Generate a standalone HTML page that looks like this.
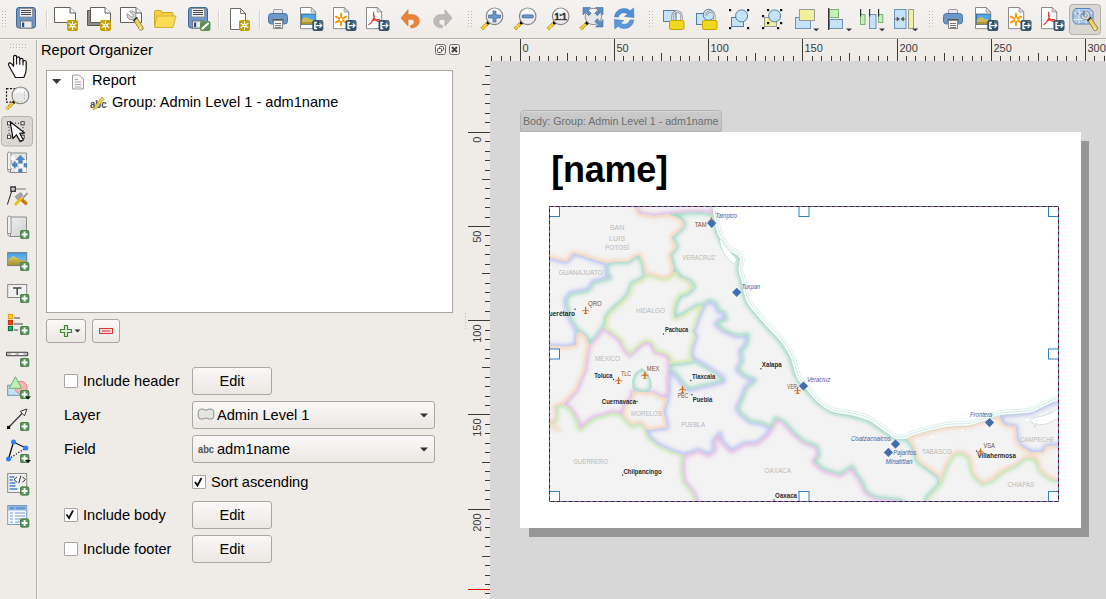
<!DOCTYPE html>
<html><head><meta charset="utf-8"><title>Report</title>
<style>
html,body{margin:0;padding:0}
body{width:1106px;height:599px;position:relative;overflow:hidden;background:#efebe7;font-family:"Liberation Sans",sans-serif;font-size:14.6px;color:#000;line-height:1}
.a{position:absolute}
.t{position:absolute;white-space:nowrap;line-height:16px;height:16px}
.btn{position:absolute;box-sizing:border-box;border:1px solid #aaa6a1;border-radius:3px;background:linear-gradient(#fbfaf9,#f1eeeb 60%,#ebe7e3);text-align:center}
.cb{position:absolute;box-sizing:border-box;width:14px;height:14px;border:1px solid #a9a6a2;background:#fff;border-radius:1px}
svg{position:absolute;overflow:visible}
svg text{font-family:"Liberation Sans",sans-serif}
</style></head><body>
<!-- top toolbar -->
<div class="a" style="left:0;top:0;width:1106px;height:38px;background:linear-gradient(#f5f3f1,#efebe7)"></div>
<div class="a" style="left:0;top:38px;width:1106px;height:1px;background:#b4b0ac"></div>
<div class="a" style="left:0;top:39px;width:1106px;height:1px;background:#f8f6f4"></div>
<!-- left toolbar separator -->
<div class="a" style="left:36px;top:40px;width:1px;height:559px;background:#b4b0ac"></div>
<div class="a" style="left:37px;top:40px;width:1px;height:559px;background:#f8f6f4"></div>
<svg id="topicons" width="1106" height="38" style="left:0;top:0" viewBox="0 0 1106 38">
<rect x="2" y="11" width="1" height="1" fill="#bcb8b3"/><rect x="3" y="12" width="1" height="1" fill="#fbfaf9" opacity=".8"/><rect x="5" y="11" width="1" height="1" fill="#bcb8b3"/><rect x="6" y="12" width="1" height="1" fill="#fbfaf9" opacity=".8"/><rect x="2" y="14" width="1" height="1" fill="#bcb8b3"/><rect x="3" y="15" width="1" height="1" fill="#fbfaf9" opacity=".8"/><rect x="5" y="14" width="1" height="1" fill="#bcb8b3"/><rect x="6" y="15" width="1" height="1" fill="#fbfaf9" opacity=".8"/><rect x="2" y="17" width="1" height="1" fill="#bcb8b3"/><rect x="3" y="18" width="1" height="1" fill="#fbfaf9" opacity=".8"/><rect x="5" y="17" width="1" height="1" fill="#bcb8b3"/><rect x="6" y="18" width="1" height="1" fill="#fbfaf9" opacity=".8"/><rect x="2" y="20" width="1" height="1" fill="#bcb8b3"/><rect x="3" y="21" width="1" height="1" fill="#fbfaf9" opacity=".8"/><rect x="5" y="20" width="1" height="1" fill="#bcb8b3"/><rect x="6" y="21" width="1" height="1" fill="#fbfaf9" opacity=".8"/><rect x="2" y="23" width="1" height="1" fill="#bcb8b3"/><rect x="3" y="24" width="1" height="1" fill="#fbfaf9" opacity=".8"/><rect x="5" y="23" width="1" height="1" fill="#bcb8b3"/><rect x="6" y="24" width="1" height="1" fill="#fbfaf9" opacity=".8"/><rect x="2" y="26" width="1" height="1" fill="#bcb8b3"/><rect x="3" y="27" width="1" height="1" fill="#fbfaf9" opacity=".8"/><rect x="5" y="26" width="1" height="1" fill="#bcb8b3"/><rect x="6" y="27" width="1" height="1" fill="#fbfaf9" opacity=".8"/>
<rect x="16.5" y="7.5" width="19" height="20.500" rx="2.500" fill="#6d97c8" stroke="#3f6a9b"/><rect x="19.5" y="8.5" width="13" height="8.500" fill="#ececec" stroke="#8a8a8a" stroke-width=".8"/><path d="M21 10.5h10M21 12.5h10M21 14.5h10" stroke="#4a4a4a" stroke-width="1"/><rect x="20.5" y="21" width="11.500" height="7" fill="#ececec" stroke="#6a6a6a" stroke-width=".8"/><rect x="22" y="22.5" width="2.200" height="4.500" fill="#2f4e78"/>
<rect x="46" y="10" width="1" height="19" fill="#d6d2ce"/><rect x="47" y="10" width="1" height="19" fill="#fdfcfb"/>
<path d="M54.5 7.5h15.5l5.5 5.5v9.5h-21z" fill="#fff" stroke="#5f5f5f" stroke-width="1" stroke-linejoin="round"/><path d="M70.0 7.5v5.5h5.5" fill="#fbfbfb" stroke="#5f5f5f" stroke-width="1" stroke-linejoin="round"/>
<rect x="67" y="20" width="11" height="11" rx="2" fill="#c4a000"/><g stroke="#fff" stroke-width="1.1" stroke-linecap="round"><path d="M72.5 21.5v8M69.0 23.5l7 4M69.0 27.5l7 -4"/></g><circle cx="72.5" cy="25.5" r="2" fill="#fff"/><circle cx="72.5" cy="25.5" r=".8" fill="#c4a000"/>
<path d="M90 10.500h-2.500v15h15v-3" fill="#8c8c84" stroke="#5a5a55" stroke-linejoin="round"/>
<path d="M90.5 7.5h14.5l5.5 5.5v9.5h-20z" fill="#fff" stroke="#5f5f5f" stroke-width="1" stroke-linejoin="round"/><path d="M105.0 7.5v5.5h5.5" fill="#fbfbfb" stroke="#5f5f5f" stroke-width="1" stroke-linejoin="round"/>
<rect x="100" y="20" width="11" height="11" rx="2" fill="#c4a000"/><g stroke="#fff" stroke-width="1.1" stroke-linecap="round"><path d="M105.5 21.5v8M102.0 23.5l7 4M102.0 27.5l7 -4"/></g><circle cx="105.5" cy="25.5" r="2" fill="#fff"/><circle cx="105.5" cy="25.5" r=".8" fill="#c4a000"/>
<path d="M120.5 7.5h15.5l5.5 5.5v9.5h-21z" fill="#fff" stroke="#5f5f5f" stroke-width="1" stroke-linejoin="round"/><path d="M136.0 7.5v5.5h5.5" fill="#fbfbfb" stroke="#5f5f5f" stroke-width="1" stroke-linejoin="round"/>
<path d="M135.50 19.40L141 28" stroke="#9c8630" stroke-width="5" stroke-linecap="round"/><path d="M135.70 19.60L141 28" stroke="#ead36c" stroke-width="3.300" stroke-linecap="round"/><path d="M139.70 27.70l1.300 1.300" stroke="#f8f4e0" stroke-width="1.200"/><path d="M133.00 16.90L134.90 18.80" stroke="#8a8a8a" stroke-width="4.400"/><path d="M133.00 16.90L134.90 18.80" stroke="#d4d4d4" stroke-width="3"/><path d="M134.70 18.60l1.100 1.100" stroke="#2e2e2e" stroke-width="5"/><path d="M129.71 11.38A4.4 4.4 0 1 1 127.48 13.61L130.73 16.86A1.6 1.6 0 0 0 132.96 14.63z" fill="#dadada" stroke="#858585" stroke-width=".9" stroke-linejoin="round"/>
<path d="M154.500 27v-15.500q0-1 1-1h5q1 0 1.300 1l.4 1h9.800q1 0 1 1v2.500" fill="#f5cf3f" stroke="#c9a62e" stroke-linejoin="round"/><path d="M154.500 27.500l2.500-11.500h19l-3 11.500z" fill="#fcdc55" stroke="#d4b136" stroke-linejoin="round"/>
<rect x="188.5" y="7.5" width="19" height="20.500" rx="2.500" fill="#6d97c8" stroke="#3f6a9b"/><rect x="191.5" y="8.5" width="13" height="8.500" fill="#ececec" stroke="#8a8a8a" stroke-width=".8"/><path d="M193 10.5h10M193 12.5h10M193 14.5h10" stroke="#4a4a4a" stroke-width="1"/><rect x="192.5" y="21" width="11.500" height="7" fill="#ececec" stroke="#6a6a6a" stroke-width=".8"/><rect x="194" y="22.5" width="2.200" height="4.500" fill="#2f4e78"/>
<rect x="200" y="21" width="10.500" height="10" rx="2" fill="#5d9151"/><path d="M202.500 28.500l5.500-5" stroke="#fff" stroke-width="2.200" stroke-linecap="round"/>
<rect x="218" y="10" width="1" height="19" fill="#d6d2ce"/><rect x="219" y="10" width="1" height="19" fill="#fdfcfb"/>
<path d="M230.5 8.5h10l5 5v16h-15z" fill="#fff" stroke="#6a6a6a" stroke-width="1" stroke-linejoin="round"/><path d="M240.5 8.5v5h5z" fill="#e4e4e4" stroke="#6a6a6a" stroke-width=".8" stroke-linejoin="round"/>
<rect x="239" y="20" width="11" height="11" rx="2" fill="#c4a000"/><g stroke="#fff" stroke-width="1.1" stroke-linecap="round"><path d="M244.5 21.5v8M241.0 23.5l7 4M241.0 27.5l7 -4"/></g><circle cx="244.5" cy="25.5" r="2" fill="#fff"/><circle cx="244.5" cy="25.5" r=".8" fill="#c4a000"/>
<rect x="259" y="10" width="1" height="19" fill="#d6d2ce"/><rect x="260" y="10" width="1" height="19" fill="#fdfcfb"/>
<rect x="273.5" y="9.500" width="9" height="6" rx=".8" fill="#e9e9e9" stroke="#9a9a9a"/><rect x="268.5" y="13.500" width="19" height="10.500" rx="3" fill="#6d97c8" stroke="#4a76a8"/><rect x="272.5" y="19" width="11" height="3" fill="#555"/><rect x="273.5" y="20.500" width="9" height="8" fill="#f4f4f4" stroke="#8a8a8a"/><path d="M275 23.5h6M275 25.500h6M275 27.500h6" stroke="#777" stroke-width="1"/>
<path d="M300.5 7.5h10.7l4.5 4.5v16.7h-15.2z" fill="#fff" stroke="#8a8a8a" stroke-width="1" stroke-linejoin="round"/><path d="M311.2 7.5v4.5h4.5z" fill="#e4e4e4" stroke="#8a8a8a" stroke-width=".8" stroke-linejoin="round"/>
<rect x="301.0" y="13.600" width="14.500" height="11.400" fill="#3f6286"/><rect x="301.8" y="14.500" width="13" height="9.700" fill="#4aa8f0"/><path d="M301.8 24.200v-4.800l4-2.600 4 2 5 1.500v3.900z" fill="#cdb85a"/><path d="M301.8 24.200v-2.200h13v2.200z" fill="#ad9530"/>
<rect x="312.3" y="20" width="11" height="11" rx="2.200" fill="#31536b"/><path d="M318.3 20.6h2.800a1.600 1.600 0 0 1 1.600 1.600v3.500z" fill="#5d7a8e" opacity=".8"/><path d="M317.0 22.6h-2.100v6h2.100" fill="none" stroke="#fff" stroke-width="1.500"/><path d="M315.7 25.6h5.600" stroke="#fff" stroke-width="1.300"/><path d="M319.5 23.4l2.300 2.200-2.300 2.200" fill="none" stroke="#fff" stroke-width="1.100"/>
<path d="M333.5 7.5h10.7l4.5 4.5v16.7h-15.2z" fill="#fff" stroke="#8a8a8a" stroke-width="1" stroke-linejoin="round"/><path d="M344.2 7.5v4.5h4.5z" fill="#e4e4e4" stroke="#8a8a8a" stroke-width=".8" stroke-linejoin="round"/>
<path d="M341.00 17.30L341.00 13.70M339.09 18.40L335.98 16.60M339.09 20.60L335.98 22.40M341.00 21.70L341.00 25.30M342.91 20.60L346.02 22.40M342.91 18.40L346.02 16.60" stroke="#ff9800" stroke-width="2" stroke-linecap="round"/>
<rect x="345.5" y="20" width="11" height="11" rx="2.200" fill="#31536b"/><path d="M351.5 20.6h2.800a1.600 1.600 0 0 1 1.600 1.600v3.500z" fill="#5d7a8e" opacity=".8"/><path d="M350.2 22.6h-2.100v6h2.100" fill="none" stroke="#fff" stroke-width="1.500"/><path d="M348.9 25.6h5.600" stroke="#fff" stroke-width="1.300"/><path d="M352.7 23.4l2.300 2.200-2.300 2.200" fill="none" stroke="#fff" stroke-width="1.100"/>
<path d="M366.5 7.5h10.7l4.5 4.5v16.7h-15.2z" fill="#fff" stroke="#8a8a8a" stroke-width="1" stroke-linejoin="round"/><path d="M377.2 7.5v4.5h4.5z" fill="#e4e4e4" stroke="#8a8a8a" stroke-width=".8" stroke-linejoin="round"/>
<path d="M373.7 12.500c-.6 3 .3 5.500 2 7.500 1.500 1.300 3.200 1.800 5 1.500M374.3 16c-.5 3.500-2.500 6.500-5.300 8.500M372.0 21c2.500-1.200 5-1.600 7.500-1.300" fill="none" stroke="#e8352a" stroke-width="1.300" stroke-linecap="round"/>
<rect x="378.5" y="20" width="11" height="11" rx="2.200" fill="#31536b"/><path d="M384.5 20.6h2.800a1.600 1.600 0 0 1 1.600 1.600v3.500z" fill="#5d7a8e" opacity=".8"/><path d="M383.2 22.6h-2.100v6h2.100" fill="none" stroke="#fff" stroke-width="1.500"/><path d="M381.9 25.6h5.600" stroke="#fff" stroke-width="1.300"/><path d="M385.7 23.4l2.300 2.200-2.300 2.200" fill="none" stroke="#fff" stroke-width="1.100"/>
<rect x="948.5" y="9.500" width="9" height="6" rx=".8" fill="#e9e9e9" stroke="#9a9a9a"/><rect x="943.5" y="13.500" width="19" height="10.500" rx="3" fill="#6d97c8" stroke="#4a76a8"/><rect x="947.5" y="19" width="11" height="3" fill="#555"/><rect x="948.5" y="20.500" width="9" height="8" fill="#f4f4f4" stroke="#8a8a8a"/><path d="M950 23.5h6M950 25.500h6M950 27.500h6" stroke="#777" stroke-width="1"/>
<path d="M975.5 7.5h10.7l4.5 4.5v16.7h-15.2z" fill="#fff" stroke="#8a8a8a" stroke-width="1" stroke-linejoin="round"/><path d="M986.2 7.5v4.5h4.5z" fill="#e4e4e4" stroke="#8a8a8a" stroke-width=".8" stroke-linejoin="round"/>
<rect x="976.0" y="13.600" width="14.500" height="11.400" fill="#3f6286"/><rect x="976.8" y="14.500" width="13" height="9.700" fill="#4aa8f0"/><path d="M976.8 24.200v-4.800l4-2.600 4 2 5 1.500v3.900z" fill="#cdb85a"/><path d="M976.8 24.200v-2.200h13v2.200z" fill="#ad9530"/>
<rect x="987.3" y="20" width="11" height="11" rx="2.200" fill="#31536b"/><path d="M993.3 20.6h2.800a1.600 1.600 0 0 1 1.600 1.600v3.500z" fill="#5d7a8e" opacity=".8"/><path d="M992.0 22.6h-2.100v6h2.100" fill="none" stroke="#fff" stroke-width="1.500"/><path d="M990.6999999999999 25.6h5.600" stroke="#fff" stroke-width="1.300"/><path d="M994.5 23.4l2.300 2.200-2.300 2.200" fill="none" stroke="#fff" stroke-width="1.100"/>
<path d="M1008.5 7.5h10.7l4.5 4.5v16.7h-15.2z" fill="#fff" stroke="#8a8a8a" stroke-width="1" stroke-linejoin="round"/><path d="M1019.2 7.5v4.5h4.5z" fill="#e4e4e4" stroke="#8a8a8a" stroke-width=".8" stroke-linejoin="round"/>
<path d="M1016.00 17.30L1016.00 13.70M1014.09 18.40L1010.98 16.60M1014.09 20.60L1010.98 22.40M1016.00 21.70L1016.00 25.30M1017.91 20.60L1021.02 22.40M1017.91 18.40L1021.02 16.60" stroke="#ff9800" stroke-width="2" stroke-linecap="round"/>
<rect x="1020.5" y="20" width="11" height="11" rx="2.200" fill="#31536b"/><path d="M1026.5 20.6h2.800a1.600 1.600 0 0 1 1.600 1.600v3.500z" fill="#5d7a8e" opacity=".8"/><path d="M1025.2 22.6h-2.100v6h2.100" fill="none" stroke="#fff" stroke-width="1.500"/><path d="M1023.9 25.6h5.600" stroke="#fff" stroke-width="1.300"/><path d="M1027.7 23.4l2.300 2.200-2.300 2.200" fill="none" stroke="#fff" stroke-width="1.100"/>
<path d="M1041.5 7.5h10.7l4.5 4.5v16.7h-15.2z" fill="#fff" stroke="#8a8a8a" stroke-width="1" stroke-linejoin="round"/><path d="M1052.2 7.5v4.5h4.5z" fill="#e4e4e4" stroke="#8a8a8a" stroke-width=".8" stroke-linejoin="round"/>
<path d="M1048.7 12.500c-.6 3 .3 5.500 2 7.500 1.500 1.300 3.200 1.800 5 1.500M1049.3 16c-.5 3.500-2.500 6.500-5.300 8.500M1047.0 21c2.500-1.200 5-1.600 7.500-1.300" fill="none" stroke="#e8352a" stroke-width="1.300" stroke-linecap="round"/>
<rect x="1053.5" y="20" width="11" height="11" rx="2.200" fill="#31536b"/><path d="M1059.5 20.6h2.800a1.600 1.600 0 0 1 1.600 1.600v3.500z" fill="#5d7a8e" opacity=".8"/><path d="M1058.2 22.6h-2.100v6h2.100" fill="none" stroke="#fff" stroke-width="1.500"/><path d="M1056.9 25.6h5.600" stroke="#fff" stroke-width="1.300"/><path d="M1060.7 23.4l2.300 2.200-2.300 2.200" fill="none" stroke="#fff" stroke-width="1.100"/>
<path d="M401 18L408 9.800V14.700H412C416.5 14.700 419.2 17.300 419.2 21C419.2 25 416 27.800 411 27.800L410.2 25.600C412.8 25.300 414.2 24 414.2 22C414.2 20.200 413 19.200 411 19.200H408V26Z" fill="#e8833a" stroke="#de7426" stroke-width=".7" stroke-linejoin="round"/>
<path d="M452 18L445 9.800V14.700H441C436.5 14.700 433.8 17.300 433.8 21C433.8 25 437 27.800 442 27.800L442.8 25.600C440.2 25.300 438.8 24 438.8 22C438.8 20.200 440 19.200 442 19.200H445V26Z" fill="#bdbbb8" stroke="#a9a7a4" stroke-width=".7" stroke-linejoin="round"/>
<rect x="468" y="11" width="1" height="1" fill="#bcb8b3"/><rect x="469" y="12" width="1" height="1" fill="#fbfaf9" opacity=".8"/><rect x="471" y="11" width="1" height="1" fill="#bcb8b3"/><rect x="472" y="12" width="1" height="1" fill="#fbfaf9" opacity=".8"/><rect x="468" y="14" width="1" height="1" fill="#bcb8b3"/><rect x="469" y="15" width="1" height="1" fill="#fbfaf9" opacity=".8"/><rect x="471" y="14" width="1" height="1" fill="#bcb8b3"/><rect x="472" y="15" width="1" height="1" fill="#fbfaf9" opacity=".8"/><rect x="468" y="17" width="1" height="1" fill="#bcb8b3"/><rect x="469" y="18" width="1" height="1" fill="#fbfaf9" opacity=".8"/><rect x="471" y="17" width="1" height="1" fill="#bcb8b3"/><rect x="472" y="18" width="1" height="1" fill="#fbfaf9" opacity=".8"/><rect x="468" y="20" width="1" height="1" fill="#bcb8b3"/><rect x="469" y="21" width="1" height="1" fill="#fbfaf9" opacity=".8"/><rect x="471" y="20" width="1" height="1" fill="#bcb8b3"/><rect x="472" y="21" width="1" height="1" fill="#fbfaf9" opacity=".8"/><rect x="468" y="23" width="1" height="1" fill="#bcb8b3"/><rect x="469" y="24" width="1" height="1" fill="#fbfaf9" opacity=".8"/><rect x="471" y="23" width="1" height="1" fill="#bcb8b3"/><rect x="472" y="24" width="1" height="1" fill="#fbfaf9" opacity=".8"/><rect x="468" y="26" width="1" height="1" fill="#bcb8b3"/><rect x="469" y="27" width="1" height="1" fill="#fbfaf9" opacity=".8"/><rect x="471" y="26" width="1" height="1" fill="#bcb8b3"/><rect x="472" y="27" width="1" height="1" fill="#fbfaf9" opacity=".8"/>
<path d="M488.3 22.700000000000003l-6.600 6.200" stroke="#6b5d14" stroke-width="3.600" stroke-dasharray="1 1"/><path d="M488.3 22.700000000000003l-6.600 6.200" stroke="#f7cb1c" stroke-width="2.400"/><circle cx="488.2" cy="22.8" r="1.700" fill="#0a0a0a"/><circle cx="494.5" cy="16.3" r="8.3" fill="#ececec" stroke="#858585" stroke-width="1.100"/>
<path d="M487.8 15.3a6.700000000000001 6.700000000000001 0 0 1 13.400000000000002 0a12.3 12.3 0 0 0 -13.400000000000002 0z" fill="#fff" opacity=".75"/>
<path d="M493 11h3v4h4.500v3h-4.500v4h-3v-4h-4.500v-3h4.500z" fill="#6a97cc" stroke="#3f6c9f" stroke-width=".7"/>
<path d="M521.5 22.700000000000003l-6.600 6.200" stroke="#6b5d14" stroke-width="3.600" stroke-dasharray="1 1"/><path d="M521.5 22.700000000000003l-6.600 6.200" stroke="#f7cb1c" stroke-width="2.400"/><circle cx="521.4000000000001" cy="22.8" r="1.700" fill="#0a0a0a"/><circle cx="527.7" cy="16.3" r="8.3" fill="#ececec" stroke="#858585" stroke-width="1.100"/>
<path d="M521.0000000000001 15.3a6.700000000000001 6.700000000000001 0 0 1 13.400000000000002 0a12.3 12.3 0 0 0 -13.400000000000002 0z" fill="#fff" opacity=".75"/>
<rect x="522" y="14.900" width="11.400" height="3" rx="1" fill="#6a97cc" stroke="#3f6c9f" stroke-width=".7"/>
<path d="M554.5 22.700000000000003l-6.600 6.200" stroke="#6b5d14" stroke-width="3.600" stroke-dasharray="1 1"/><path d="M554.5 22.700000000000003l-6.600 6.200" stroke="#f7cb1c" stroke-width="2.400"/><circle cx="554.4000000000001" cy="22.8" r="1.700" fill="#0a0a0a"/><circle cx="560.7" cy="16.3" r="8.3" fill="#ececec" stroke="#858585" stroke-width="1.100"/>
<path d="M554.0000000000001 15.3a6.700000000000001 6.700000000000001 0 0 1 13.400000000000002 0a12.3 12.3 0 0 0 -13.400000000000002 0z" fill="#fff" opacity=".75"/>
<text x="560.400" y="19.700" text-rendering="geometricPrecision" text-anchor="middle" font-size="10" fill="#2e3436" stroke="#2e3436" stroke-width=".7" letter-spacing="-.6">1:1</text>
<path d="M587.200 22.900l-6.600 6.200" stroke="#6b5d14" stroke-width="3.600" stroke-dasharray="1 1"/><path d="M587.200 22.900l-6.600 6.200" stroke="#f7cb1c" stroke-width="2.400"/><circle cx="587.100" cy="23" r="1.700" fill="#0a0a0a"/>
<circle cx="593.400" cy="16.500" r="8.200" fill="#e6e6e6"/><path d="M586.800 15a6.600 6.600 0 0 1 13.200 0a12 12 0 0 0 -13.200 0z" fill="#fff" opacity=".7"/>
<path d="M583 7.500h7.500l-2.500 2.500 3.200 3.200-2.500 2.500-3.200-3.200-2.500 2.500zM603 7.500h-7.500l2.500 2.500-3.200 3.200 2.500 2.500 3.200-3.200 2.500 2.500zM603 27v-7.500l-2.500 2.500-3.200-3.200-2.500 2.500 3.200 3.200-2.500 2.500z" fill="#5b8cc6" stroke="#41709f" stroke-width=".6" stroke-linejoin="round"/>
<circle cx="593.400" cy="16.500" r="8.200" fill="none" stroke="#8a8a8a" stroke-width="1"/>
<path d="M614.500 17c.5-5 4.500-8.500 9.500-8.500 2.500 0 4.500.8 6.200 2.200l3.300-2.700.5 9.500-9.500-1 3-2.600c-1-.8-2.200-1.200-3.500-1.200-2.800 0-5 2-5.500 4.300z" fill="#4f8fd6" stroke="#3a78c0" stroke-width=".5"/>
<path d="M633.800 20c-.5 5-4.500 8.500-9.500 8.500-2.500 0-4.500-.8-6.200-2.200l-3.300 2.700-.5-9.500 9.500 1-3 2.600c1 .8 2.200 1.200 3.500 1.200 2.800 0 5-2 5.500-4.300z" fill="#5a98dc" stroke="#3a78c0" stroke-width=".5"/>
<rect x="649" y="11" width="1" height="1" fill="#bcb8b3"/><rect x="650" y="12" width="1" height="1" fill="#fbfaf9" opacity=".8"/><rect x="652" y="11" width="1" height="1" fill="#bcb8b3"/><rect x="653" y="12" width="1" height="1" fill="#fbfaf9" opacity=".8"/><rect x="649" y="14" width="1" height="1" fill="#bcb8b3"/><rect x="650" y="15" width="1" height="1" fill="#fbfaf9" opacity=".8"/><rect x="652" y="14" width="1" height="1" fill="#bcb8b3"/><rect x="653" y="15" width="1" height="1" fill="#fbfaf9" opacity=".8"/><rect x="649" y="17" width="1" height="1" fill="#bcb8b3"/><rect x="650" y="18" width="1" height="1" fill="#fbfaf9" opacity=".8"/><rect x="652" y="17" width="1" height="1" fill="#bcb8b3"/><rect x="653" y="18" width="1" height="1" fill="#fbfaf9" opacity=".8"/><rect x="649" y="20" width="1" height="1" fill="#bcb8b3"/><rect x="650" y="21" width="1" height="1" fill="#fbfaf9" opacity=".8"/><rect x="652" y="20" width="1" height="1" fill="#bcb8b3"/><rect x="653" y="21" width="1" height="1" fill="#fbfaf9" opacity=".8"/><rect x="649" y="23" width="1" height="1" fill="#bcb8b3"/><rect x="650" y="24" width="1" height="1" fill="#fbfaf9" opacity=".8"/><rect x="652" y="23" width="1" height="1" fill="#bcb8b3"/><rect x="653" y="24" width="1" height="1" fill="#fbfaf9" opacity=".8"/><rect x="649" y="26" width="1" height="1" fill="#bcb8b3"/><rect x="650" y="27" width="1" height="1" fill="#fbfaf9" opacity=".8"/><rect x="652" y="26" width="1" height="1" fill="#bcb8b3"/><rect x="653" y="27" width="1" height="1" fill="#fbfaf9" opacity=".8"/>
<rect x="663.500" y="10.500" width="12.500" height="11" fill="#c6e2f7" stroke="#4f7da6"/>
<path d="M672.500 21v-4.500a4.500 5 0 0 1 9 0v4.500" fill="none" stroke="#9a9a9a" stroke-width="2.600"/><path d="M672.500 21v-4.500a4.500 5 0 0 1 9 0v4.500" fill="none" stroke="#e0e0e0" stroke-width="1"/>
<rect x="669.500" y="20.500" width="14.500" height="9" rx="1.500" fill="#f0d81e" stroke="#c9a400"/>
<rect x="696.500" y="13.500" width="12" height="11" fill="#c6e2f7" stroke="#4f7da6"/><circle cx="708.700" cy="14.800" r="5.500" fill="#c6e2f7" stroke="#4f7da6"/>
<path d="M714.500 21v-4.500a4.200 4.500 0 0 0-8.400-.5" fill="none" stroke="#9a9a9a" stroke-width="2.400"/><path d="M714.500 21v-4.500a4.200 4.500 0 0 0-8.400-.5" fill="none" stroke="#e4e4e4" stroke-width=".9"/>
<rect x="702.500" y="20.500" width="14.500" height="9" rx="1.500" fill="#f0d81e" stroke="#c9a400"/>
<rect x="731.500" y="17.500" width="12" height="9" fill="#c6e2f7" stroke="#4f7da6"/><circle cx="741.600" cy="15.900" r="6" fill="#c6e2f7" stroke="#4f7da6"/>
<rect x="729" y="9" width="2.200" height="2.200" fill="#111"/>
<rect x="747" y="9" width="2.200" height="2.200" fill="#111"/>
<rect x="729" y="27" width="2.200" height="2.200" fill="#111"/>
<rect x="747" y="27" width="2.200" height="2.200" fill="#111"/>
<rect x="764.500" y="17.500" width="12" height="9" fill="#f3f09a" stroke="#9a9a9a"/><circle cx="774.600" cy="15.900" r="6" fill="#c6e2f7" stroke="#4f7da6"/>
<rect x="767" y="9" width="2.200" height="2.200" fill="#111"/>
<rect x="780" y="9" width="2.200" height="2.200" fill="#111"/>
<rect x="762" y="15" width="2.200" height="2.200" fill="#111"/>
<rect x="767" y="22" width="2.200" height="2.200" fill="#111"/>
<rect x="780" y="22" width="2.200" height="2.200" fill="#111"/>
<rect x="762" y="27" width="2.200" height="2.200" fill="#111"/>
<rect x="777" y="27" width="2.200" height="2.200" fill="#111"/>
<rect x="795.500" y="17.500" width="15" height="11" fill="#c6e2f7" stroke="#6a93b8"/><rect x="799.500" y="9.500" width="15" height="11" fill="#f3f09a" stroke="#9a9a9a"/>
<path d="M813.2 28.500h6l-3 2.700z" fill="#333"/>
<rect x="829.500" y="9.500" width="9" height="8" fill="#c2f0b8" stroke="#7ab070"/><rect x="829.500" y="19.500" width="13" height="9" fill="#c6e2f7" stroke="#6a93b8"/><rect x="828" y="8" width="1.300" height="22" fill="#333"/>
<path d="M846 28.500h6l-3 2.700z" fill="#333"/>
<rect x="860.500" y="14.500" width="4.500" height="10" fill="#c2f0b8" stroke="#7ab070"/><rect x="869.500" y="14.500" width="6.500" height="14" fill="#c6e2f7" stroke="#6a93b8"/><rect x="878.500" y="14.500" width="4.300" height="8" fill="#c2f0b8" stroke="#7ab070"/>
<rect x="860" y="9" width="1.200" height="7.500" fill="#333"/>
<rect x="869" y="9" width="1.200" height="7.500" fill="#333"/>
<rect x="878" y="9" width="1.200" height="7.500" fill="#333"/>
<path d="M879 28.500h6l-3 2.700z" fill="#333"/>
<rect x="894.500" y="9.500" width="11.500" height="19" fill="#c6e2f7" stroke="#6a93b8"/><rect x="908.500" y="9.500" width="5" height="19" fill="#f3f09a" stroke="#9a9a9a"/>
<path d="M894.500 19h2.500v-2l2.500 2-2.500 2v-2M906 19h-2.500v-2l-2.500 2 2.500 2v-2" fill="#555" stroke="#555" stroke-width=".7"/>
<path d="M912.2 28.500h6l-3 2.700z" fill="#333"/>
<rect x="929" y="11" width="1" height="1" fill="#bcb8b3"/><rect x="930" y="12" width="1" height="1" fill="#fbfaf9" opacity=".8"/><rect x="932" y="11" width="1" height="1" fill="#bcb8b3"/><rect x="933" y="12" width="1" height="1" fill="#fbfaf9" opacity=".8"/><rect x="929" y="14" width="1" height="1" fill="#bcb8b3"/><rect x="930" y="15" width="1" height="1" fill="#fbfaf9" opacity=".8"/><rect x="932" y="14" width="1" height="1" fill="#bcb8b3"/><rect x="933" y="15" width="1" height="1" fill="#fbfaf9" opacity=".8"/><rect x="929" y="17" width="1" height="1" fill="#bcb8b3"/><rect x="930" y="18" width="1" height="1" fill="#fbfaf9" opacity=".8"/><rect x="932" y="17" width="1" height="1" fill="#bcb8b3"/><rect x="933" y="18" width="1" height="1" fill="#fbfaf9" opacity=".8"/><rect x="929" y="20" width="1" height="1" fill="#bcb8b3"/><rect x="930" y="21" width="1" height="1" fill="#fbfaf9" opacity=".8"/><rect x="932" y="20" width="1" height="1" fill="#bcb8b3"/><rect x="933" y="21" width="1" height="1" fill="#fbfaf9" opacity=".8"/><rect x="929" y="23" width="1" height="1" fill="#bcb8b3"/><rect x="930" y="24" width="1" height="1" fill="#fbfaf9" opacity=".8"/><rect x="932" y="23" width="1" height="1" fill="#bcb8b3"/><rect x="933" y="24" width="1" height="1" fill="#fbfaf9" opacity=".8"/><rect x="929" y="26" width="1" height="1" fill="#bcb8b3"/><rect x="930" y="27" width="1" height="1" fill="#fbfaf9" opacity=".8"/><rect x="932" y="26" width="1" height="1" fill="#bcb8b3"/><rect x="933" y="27" width="1" height="1" fill="#fbfaf9" opacity=".8"/>
<rect x="1069.500" y="4.500" width="31" height="30" rx="3" fill="#dad6d2" stroke="#b3afab"/>
<path d="M1075.500 8.500h14.500l3 3v9.500l-3 3h-14.500l-2.500-3v-9.500z" fill="#a9c4e6" stroke="#5a84b8"/><path d="M1079 9v14.500M1086 9v14.500M1073.500 13h19M1073.500 19.500h19" stroke="#e4eefa" stroke-width="1"/><path d="M1076 12l2 3 1-2zM1083 11l2 2-1 3-2-1zM1088 12l2 1-1 2z" fill="#4a76b0" opacity=".8"/>
<path d="M1089.50 19.40L1095.5 28.5" stroke="#9c8630" stroke-width="5" stroke-linecap="round"/><path d="M1089.70 19.60L1095.5 28.5" stroke="#ead36c" stroke-width="3.300" stroke-linecap="round"/><path d="M1094.20 28.20l1.300 1.300" stroke="#f8f4e0" stroke-width="1.200"/><path d="M1087.00 16.90L1088.90 18.80" stroke="#8a8a8a" stroke-width="4.400"/><path d="M1087.00 16.90L1088.90 18.80" stroke="#d4d4d4" stroke-width="3"/><path d="M1088.70 18.60l1.100 1.100" stroke="#2e2e2e" stroke-width="5"/><path d="M1083.71 11.38A4.4 4.4 0 1 1 1081.48 13.61L1084.73 16.86A1.6 1.6 0 0 0 1086.96 14.63z" fill="#dadada" stroke="#858585" stroke-width=".9" stroke-linejoin="round"/>
</svg>
<svg id="lefticons" width="36" height="559" style="left:0;top:40px" viewBox="0 40 36 559">
<defs><linearGradient id="sg" x1="0" y1="0" x2="1" y2="1"><stop offset="0" stop-color="#efefef"/><stop offset="1" stop-color="#cfcfcf"/></linearGradient><linearGradient id="sky" x1="0" y1="0" x2="0" y2="1"><stop offset="0" stop-color="#3f9ee8"/><stop offset="1" stop-color="#8ccbf5"/></linearGradient><linearGradient id="sand" x1="0" y1="0" x2="0" y2="1"><stop offset="0" stop-color="#dccb6e"/><stop offset="1" stop-color="#a88f2a"/></linearGradient></defs>
<rect x="10" y="44" width="1" height="1" fill="#bcb8b3"/><rect x="11" y="45" width="1" height="1" fill="#fbfaf9" opacity=".8"/>
<rect x="13" y="44" width="1" height="1" fill="#bcb8b3"/><rect x="14" y="45" width="1" height="1" fill="#fbfaf9" opacity=".8"/>
<rect x="16" y="44" width="1" height="1" fill="#bcb8b3"/><rect x="17" y="45" width="1" height="1" fill="#fbfaf9" opacity=".8"/>
<rect x="19" y="44" width="1" height="1" fill="#bcb8b3"/><rect x="20" y="45" width="1" height="1" fill="#fbfaf9" opacity=".8"/>
<rect x="22" y="44" width="1" height="1" fill="#bcb8b3"/><rect x="23" y="45" width="1" height="1" fill="#fbfaf9" opacity=".8"/>
<rect x="25" y="44" width="1" height="1" fill="#bcb8b3"/><rect x="26" y="45" width="1" height="1" fill="#fbfaf9" opacity=".8"/>
<rect x="10" y="47" width="1" height="1" fill="#bcb8b3"/><rect x="11" y="48" width="1" height="1" fill="#fbfaf9" opacity=".8"/>
<rect x="13" y="47" width="1" height="1" fill="#bcb8b3"/><rect x="14" y="48" width="1" height="1" fill="#fbfaf9" opacity=".8"/>
<rect x="16" y="47" width="1" height="1" fill="#bcb8b3"/><rect x="17" y="48" width="1" height="1" fill="#fbfaf9" opacity=".8"/>
<rect x="19" y="47" width="1" height="1" fill="#bcb8b3"/><rect x="20" y="48" width="1" height="1" fill="#fbfaf9" opacity=".8"/>
<rect x="22" y="47" width="1" height="1" fill="#bcb8b3"/><rect x="23" y="48" width="1" height="1" fill="#fbfaf9" opacity=".8"/>
<rect x="25" y="47" width="1" height="1" fill="#bcb8b3"/><rect x="26" y="48" width="1" height="1" fill="#fbfaf9" opacity=".8"/>
<path d="M15.500 77.500L9.300 66.500Q7.600 63.300 9.600 62.900Q11.200 62.700 13.600 66.300V57Q13.600 55.300 15.100 55.300Q16.600 55.300 16.600 57V58.300Q16.800 56.900 18.200 56.900Q19.800 56.900 19.800 58.500V59.800Q20 58.400 21.400 58.400Q23 58.400 23 60V61.800Q23.200 60.500 24.600 60.500Q26.200 60.500 26.200 62.200V69Q26.200 73 23.800 77.500Z" fill="#fff" stroke="#111" stroke-width="1.200" stroke-linejoin="round"/><path d="M16.600 58V64.500M19.800 59.500V64.800M23 61.500V65.500" stroke="#111" stroke-width="1.100" fill="none"/>
<rect x="6.500" y="88.700" width="8" height="13.500" fill="none" stroke="#111" stroke-width="1.200" stroke-dasharray="2 1.500"/>
<path d="M14 102l-7.500 7" stroke="#6b5d14" stroke-width="3.400" stroke-dasharray="1 1"/><path d="M14 102l-7.500 7" stroke="#f7cb1c" stroke-width="2.200"/><circle cx="14" cy="102" r="1.600" fill="#0a0a0a"/><circle cx="20.400" cy="95.400" r="8.400" fill="#e8e8e8" stroke="#858585" stroke-width="1.100"/><path d="M13.700 94.400a6.800 6.800 0 0 1 13.400 0a12 12 0 0 0 -13.400 0z" fill="#fff" opacity=".7"/><path d="M24.500 91.500v8.500M14.500 102h9" stroke="#b8b8b8" stroke-width="1" stroke-dasharray="1.500 1.500" fill="none"/>
<rect x="1.500" y="116.500" width="31" height="29.500" rx="3.500" fill="#dbd7d3" stroke="#b7b3af"/>
<rect x="9" y="123.200" width="14" height="13.800" fill="none" stroke="#222" stroke-width="1" stroke-dasharray="1 2"/>
<rect x="7.5" y="121.7" width="3.200" height="3.200" fill="#fff" stroke="#333" stroke-width=".9"/>
<rect x="21" y="121.7" width="3.200" height="3.200" fill="#fff" stroke="#333" stroke-width=".9"/>
<rect x="7.5" y="135.2" width="3.200" height="3.200" fill="#fff" stroke="#333" stroke-width=".9"/>
<rect x="21" y="135.2" width="3.200" height="3.200" fill="#fff" stroke="#333" stroke-width=".9"/>
<path d="M10.200 121.800L13 138.600L16.400 134.800L20.200 141.600L23.300 139.900L19.700 133.300L24.600 132.900Z" fill="#fff" stroke="#111" stroke-width="1.200" stroke-linejoin="round"/>
<path d="M10.500 153.0h16v19.500h-16z" fill="#e4e4e4" stroke="#8a8a8a"/><path d="M7.500 154.0q0-2 1.800-2t1.800 2v15.500h-3.600z" fill="#f0f0f0" stroke="#8a8a8a" stroke-width=".9"/><path d="M7.500 169.5q0 3 3 3h2" fill="none" stroke="#8a8a8a" stroke-width=".9"/>
<path d="M11 156h4v4h-4zM19 156h4v4h-4zM15 160h4v4h-4zM23 160h3.500v4h-3.500zM11 164h4v4h-4zM19 164h4v4h-4zM15 168h4v4h-4zM23 168h3.500v4h-3.500z" fill="#f6f6f6"/>
<path d="M20.400 155.200l4.300 4.500h-2.400v3.500h-3.800v-3.500h-2.400zM11.800 164.800l3.400-3.600v2h2v3.200h-2v2zM24 163.500h2.600v3.200h-2.600zM18.600 169h3.400v3h-3.400z" fill="#4a86c8" stroke="#3a6ea8" stroke-width=".5"/>
<rect x="10.200" y="186.200" width="5.800" height="5.800" fill="#3a3a3a"/><circle cx="13.100" cy="189.100" r="1.700" fill="#fff"/><circle cx="13.100" cy="189.100" r=".7" fill="#3a3a3a"/><path d="M16 189h10" stroke="#9a9a9a" stroke-width="1.400"/><path d="M11.400 192L7.400 204.500" stroke="#222" stroke-width="1"/>
<path d="M22.500 198.500l5-5.500" stroke="#8e8e8e" stroke-width="1.600"/><path d="M21.500 199.500l5.300 4.800" stroke="#c47a14" stroke-width="3.400"/><path d="M21.500 198l-6.500 7" stroke="#e8c010" stroke-width="3"/><path d="M15.200 196.500l5.500-4 2.200 3-5.500 4z" fill="#a8a8a8" stroke="#777" stroke-width=".6"/>
<path d="M10.500 217.0h16v19.500h-16z" fill="url(#sg)" stroke="#8a8a8a"/><path d="M7.500 218.0q0-2 1.800-2t1.800 2v15.500h-3.600z" fill="#f0f0f0" stroke="#8a8a8a" stroke-width=".9"/><path d="M7.500 233.5q0 3 3 3h2" fill="none" stroke="#8a8a8a" stroke-width=".9"/>
<rect x="20" y="230" width="9.200" height="9" rx="1.800" fill="#5a9358"/><rect x="20.5" y="230.5" width="8.200" height="8" rx="1.500" fill="none" stroke="#4a7f49" stroke-width=".8"/><path d="M24.6 231.6v5.800M21.7 234.5h5.800" stroke="#fff" stroke-width="1.900"/>
<rect x="7.700" y="252.600" width="19" height="13" fill="url(#sky)" stroke="#7d7d7d"/><path d="M8.200 265.100v-5.600l5-3.600 6 3 7 2.500v3.700z" fill="url(#sand)"/>
<rect x="20" y="262" width="9.200" height="9" rx="1.800" fill="#5a9358"/><rect x="20.5" y="262.5" width="8.200" height="8" rx="1.500" fill="none" stroke="#4a7f49" stroke-width=".8"/><path d="M24.6 263.6v5.800M21.7 266.5h5.800" stroke="#fff" stroke-width="1.900"/>
<rect x="7.700" y="284.500" width="19" height="13" fill="#f0f0f0" stroke="#8a8a8a"/><path d="M13 288h8.500M17.200 288v7" stroke="#444" stroke-width="1.500" fill="none"/>
<rect x="20" y="294" width="9.200" height="9" rx="1.800" fill="#5a9358"/><rect x="20.5" y="294.5" width="8.200" height="8" rx="1.500" fill="none" stroke="#4a7f49" stroke-width=".8"/><path d="M24.6 295.6v5.800M21.7 298.5h5.800" stroke="#fff" stroke-width="1.900"/>
<rect x="8.400" y="314.400" width="4.200" height="4.200" fill="#ffd400" stroke="#f0a000"/><rect x="8.400" y="320.400" width="4.200" height="4.200" fill="#f04800" stroke="#c23000"/><rect x="8.400" y="326.400" width="4.200" height="4.200" fill="#10b858" stroke="#006838"/><path d="M14 318h6M14 324h9M14 330h4" stroke="#9a9a9a" stroke-width="1.800"/>
<rect x="20" y="326" width="9.200" height="9" rx="1.800" fill="#5a9358"/><rect x="20.5" y="326.5" width="8.200" height="8" rx="1.500" fill="none" stroke="#4a7f49" stroke-width=".8"/><path d="M24.6 327.6v5.800M21.7 330.5h5.800" stroke="#fff" stroke-width="1.900"/>
<rect x="6.500" y="352.300" width="21.200" height="3.400" rx=".8" fill="#bdbdbd" stroke="#444" stroke-width="1.100"/><path d="M11 354h4.500M19 354h4.500" stroke="#fff" stroke-width="1.600"/>
<rect x="20" y="358" width="9.200" height="9" rx="1.800" fill="#5a9358"/><rect x="20.5" y="358.5" width="8.200" height="8" rx="1.500" fill="none" stroke="#4a7f49" stroke-width=".8"/><path d="M24.6 359.6v5.800M21.7 362.5h5.800" stroke="#fff" stroke-width="1.900"/>
<rect x="7.700" y="385.300" width="12.500" height="10" fill="#c6e2f7" stroke="#6a93b8"/><circle cx="20.900" cy="387.500" r="6.200" fill="#f8b4b4" stroke="#e08888"/><path d="M15.400 376.800l6.200 11.500h-12.400z" fill="#bdf0b4" stroke="#70b068" stroke-linejoin="round"/>
<rect x="20" y="390" width="9.200" height="9" rx="1.800" fill="#5a9358"/><rect x="20.5" y="390.5" width="8.200" height="8" rx="1.500" fill="none" stroke="#4a7f49" stroke-width=".8"/><path d="M24.6 391.6v5.800M21.7 394.5h5.800" stroke="#fff" stroke-width="1.900"/>
<path d="M25 396.5h6l-3 3z" fill="#111"/>
<path d="M9 427l13.500-14" stroke="#333" stroke-width="1.100"/><rect x="7" y="425.800" width="3.200" height="3.200" fill="#111"/><path d="M27 409l-2.500 6.800-4.300-4.400z" fill="#fff" stroke="#333" stroke-width="1" stroke-linejoin="round"/>
<rect x="20" y="422" width="9.200" height="9" rx="1.800" fill="#5a9358"/><rect x="20.5" y="422.5" width="8.200" height="8" rx="1.500" fill="none" stroke="#4a7f49" stroke-width=".8"/><path d="M24.6 423.6v5.800M21.7 426.5h5.800" stroke="#fff" stroke-width="1.900"/>
<path d="M13.500 442L25.800 448M13.500 442L8.500 459" stroke="#111" stroke-width="1.300"/><path d="M8.500 459L25.800 448" stroke="#111" stroke-width="1.200" stroke-dasharray="1.300 1.600"/>
<circle cx="13.5" cy="442" r="2.500" fill="#2a7fff"/>
<circle cx="25.8" cy="448" r="2.500" fill="#2a7fff"/>
<circle cx="8.5" cy="459" r="2.500" fill="#2a7fff"/>
<rect x="20" y="454" width="9.200" height="9" rx="1.800" fill="#5a9358"/><rect x="20.5" y="454.5" width="8.200" height="8" rx="1.500" fill="none" stroke="#4a7f49" stroke-width=".8"/><path d="M24.6 455.6v5.800M21.7 458.5h5.800" stroke="#fff" stroke-width="1.900"/>
<path d="M25 460h6l-3 3z" fill="#111"/>
<rect x="7.700" y="473.500" width="19" height="19" fill="#f0f0f0" stroke="#8a8a8a"/><path d="M9.500 477h5M9.500 480h3.500M9.500 483h6M9.500 486h6M9.500 489h8" stroke="#4a86c8" stroke-width="1.400"/><path d="M17 476.800l-2.800 2.800 2.800 2.800M22.500 476.800l2.800 2.800-2.800 2.800M20.800 475.800l-2 7.500" fill="none" stroke="#111" stroke-width=".9"/>
<rect x="20" y="486.5" width="9.200" height="9" rx="1.800" fill="#5a9358"/><rect x="20.5" y="487.0" width="8.200" height="8" rx="1.500" fill="none" stroke="#4a7f49" stroke-width=".8"/><path d="M24.6 488.1v5.800M21.7 491.0h5.800" stroke="#fff" stroke-width="1.900"/>
<rect x="7.700" y="505.500" width="19" height="19" fill="#f4f7fb" stroke="#7a9cc8"/><rect x="8.200" y="506" width="18" height="4.500" fill="#8fb3e0"/><path d="M10 508.200h4M16 508.200h9" stroke="#5a86c0" stroke-width="1.200"/><path d="M10 513h3M15 513h10M10 516h3M15 516h10M10 519h3M15 519h10M10 522h3M15 522h6" stroke="#7aa0d0" stroke-width="1.100"/>
<rect x="20" y="518.5" width="9.200" height="9" rx="1.800" fill="#5a9358"/><rect x="20.5" y="519.0" width="8.200" height="8" rx="1.500" fill="none" stroke="#4a7f49" stroke-width=".8"/><path d="M24.6 520.1v5.800M21.7 523.0h5.800" stroke="#fff" stroke-width="1.900"/>
</svg>

<!-- dock -->
<div class="t" style="left:41px;top:42px;font-size:14.6px">Report Organizer</div>
<svg width="30" height="14" style="left:434px;top:43px" viewBox="434 43 30 14">
<rect x="435.5" y="44.5" width="10" height="10" rx="2" fill="#f4f2f0" stroke="#6b6b6b"/>
<rect x="439.5" y="46.5" width="4" height="4" rx="1" fill="none" stroke="#555"/>
<rect x="437.5" y="48.5" width="4" height="4" rx="1" fill="#f4f2f0" stroke="#555"/>
<rect x="449.5" y="44.5" width="10" height="10" rx="2" fill="#f4f2f0" stroke="#6b6b6b"/>
<path d="M452 47l5 5M457 47l-5 5" stroke="#444" stroke-width="2"/>
</svg>
<div class="a" style="left:46px;top:70px;width:407px;height:243px;box-sizing:border-box;border:1px solid #a9a6a2;background:#fff"></div>
<svg width="60" height="44" style="left:50px;top:72px" viewBox="50 72 60 44">
<path d="M52 79h9.200l-4.600 5z" fill="#3a3a3a"/>
<path d="M72.5 75h7l4 4v10h-11z" fill="#f4f4f4" stroke="#a0a0a0"/>
<path d="M75 79.500h3M75 82h6M75 84.500h6M75 87h6" stroke="#a0a0a0" stroke-width=".9"/>
<text x="90" y="108" font-size="10.500" font-weight="bold" fill="#4a4a4a" textLength="16.500" lengthAdjust="spacingAndGlyphs">abc</text>
<path d="M93 110l2-4 7-9 2 2-7 9z" fill="#e8d44a" stroke="#9a8a20" stroke-width=".6"/>
</svg>
<div class="t" style="left:92px;top:72px">Report</div>
<div class="t" style="left:112px;top:94.4px">Group: Admin Level 1 - adm1name</div>

<div class="btn" style="left:46px;top:319px;width:40px;height:24px"></div>
<div class="btn" style="left:92px;top:319px;width:28px;height:24px"></div>
<svg width="80" height="24" style="left:46px;top:319px" viewBox="46 319 80 24">
<path d="M64.5 325.500h3v4h4v3h-4v4h-3v-4h-4v-3h4z" fill="#dfeeda" stroke="#47803a" stroke-width="1.200"/>
<path d="M74.500 329.500h6l-3 3z" fill="#333"/>
<rect x="99.500" y="328.500" width="13" height="5" fill="#f6d6d6" stroke="#d23c3c"/>
<rect x="102" y="330.500" width="8" height="1" fill="#d23c3c"/>
</svg>

<div class="cb" style="left:64px;top:374px"></div>
<div class="t" style="left:83px;top:373px">Include header</div>
<div class="btn" style="left:192px;top:367px;width:80px;height:28px"></div><div class="t" style="left:192px;width:80px;text-align:center;top:373px">Edit</div>
<div class="t" style="left:64px;top:407px">Layer</div>
<div class="btn" style="left:192px;top:401px;width:243px;height:28px"></div>
<div class="t" style="left:217px;top:407px">Admin Level 1</div>
<div class="t" style="left:64px;top:441px">Field</div>
<div class="btn" style="left:192px;top:435px;width:243px;height:28px"></div>
<div class="t" style="left:217px;top:441px">adm1name</div>
<svg width="243" height="62" style="left:192px;top:401px" viewBox="192 401 243 62">
<path d="M199 410C201 408.600 203.500 408.800 206 410.300C208.500 408.800 211 408.600 213 409.800C214.200 412 214.200 416 213 418.300C211 419.600 208.500 419.300 206 417.800C203.500 419.300 201 419.600 199 418.300C197.800 416 197.800 412 199 410Z" fill="#e4e4e2" stroke="#8e8e8c" stroke-width="1"/>
<path d="M420 413.500h8l-4 4z" fill="#333"/>
<path d="M420 447.500h8l-4 4z" fill="#333"/>
<text x="198" y="453" font-size="10.500" font-weight="bold" fill="#555" textLength="16" lengthAdjust="spacingAndGlyphs">abc</text>
</svg>
<div class="cb" style="left:192px;top:475px;width:14px;height:14px"></div>
<div class="t" style="left:211px;top:474px">Sort ascending</div>
<div class="cb" style="left:64px;top:508px"></div>
<div class="t" style="left:83px;top:507px">Include body</div>
<div class="btn" style="left:192px;top:501px;width:80px;height:28px"></div><div class="t" style="left:192px;width:80px;text-align:center;top:507px">Edit</div>
<div class="cb" style="left:64px;top:542px"></div>
<div class="t" style="left:83px;top:541px">Include footer</div>
<div class="btn" style="left:192px;top:535px;width:80px;height:28px"></div><div class="t" style="left:192px;width:80px;text-align:center;top:541px">Edit</div>
<svg width="160" height="50" style="left:60px;top:470px" viewBox="60 470 160 50">
<path d="M195 482l2.500 3.500 4-7.500" fill="none" stroke="#111" stroke-width="1.800"/>
<path d="M66.500 514.500l2.500 3.500 4-7.500" fill="none" stroke="#111" stroke-width="1.800"/>
</svg>

<!-- canvas -->
<div class="a" style="left:490px;top:61px;width:616px;height:538px;background:#d7d7d7"></div>
<div class="a" style="left:529px;top:141px;width:560px;height:396px;background:#969696"></div>
<div class="a" style="left:520px;top:132px;width:561px;height:396px;background:#fff"></div>
<div class="a" style="left:520px;top:110px;width:202px;height:22px;box-sizing:border-box;background:linear-gradient(#cccccc,#c0c0c0);border:1px solid #b4b4b4;border-radius:4px 4px 0 0;box-shadow:inset 0 1px 0 #d6d6d6"></div>
<div class="t" style="left:523px;top:114px;font-size:10.67px;color:#6e6e6e;line-height:14px;height:14px">Body: Group: Admin Level 1 - adm1name</div>
<div class="t" style="left:551.3px;top:149px;font-size:36px;letter-spacing:-.25px;font-weight:bold;line-height:42px;height:42px">[name]</div>
<!-- rulers -->
<svg width="1106" height="599" style="left:0;top:0" viewBox="0 0 1106 599">
<rect x="491" y="56" width="1" height="5" fill="#3a3a3a"/>
<rect x="501" y="56" width="1" height="5" fill="#3a3a3a"/>
<rect x="510" y="56" width="1" height="5" fill="#3a3a3a"/>
<rect x="520" y="39" width="1" height="22" fill="#3a3a3a"/>
<text x="522.5" y="52" font-size="11" fill="#3c3c3c">0</text>
<rect x="529" y="56" width="1" height="5" fill="#3a3a3a"/>
<rect x="539" y="56" width="1" height="5" fill="#3a3a3a"/>
<rect x="548" y="56" width="1" height="5" fill="#3a3a3a"/>
<rect x="557" y="56" width="1" height="5" fill="#3a3a3a"/>
<rect x="567" y="53" width="1" height="8" fill="#3a3a3a"/>
<rect x="576" y="56" width="1" height="5" fill="#3a3a3a"/>
<rect x="586" y="56" width="1" height="5" fill="#3a3a3a"/>
<rect x="595" y="56" width="1" height="5" fill="#3a3a3a"/>
<rect x="605" y="56" width="1" height="5" fill="#3a3a3a"/>
<rect x="614" y="39" width="1" height="22" fill="#3a3a3a"/>
<text x="616.5" y="52" font-size="11" fill="#3c3c3c">50</text>
<rect x="623" y="56" width="1" height="5" fill="#3a3a3a"/>
<rect x="633" y="56" width="1" height="5" fill="#3a3a3a"/>
<rect x="642" y="56" width="1" height="5" fill="#3a3a3a"/>
<rect x="652" y="56" width="1" height="5" fill="#3a3a3a"/>
<rect x="661" y="53" width="1" height="8" fill="#3a3a3a"/>
<rect x="670" y="56" width="1" height="5" fill="#3a3a3a"/>
<rect x="680" y="56" width="1" height="5" fill="#3a3a3a"/>
<rect x="689" y="56" width="1" height="5" fill="#3a3a3a"/>
<rect x="699" y="56" width="1" height="5" fill="#3a3a3a"/>
<rect x="708" y="39" width="1" height="22" fill="#3a3a3a"/>
<text x="710.5" y="52" font-size="11" fill="#3c3c3c">100</text>
<rect x="718" y="56" width="1" height="5" fill="#3a3a3a"/>
<rect x="727" y="56" width="1" height="5" fill="#3a3a3a"/>
<rect x="736" y="56" width="1" height="5" fill="#3a3a3a"/>
<rect x="746" y="56" width="1" height="5" fill="#3a3a3a"/>
<rect x="755" y="53" width="1" height="8" fill="#3a3a3a"/>
<rect x="765" y="56" width="1" height="5" fill="#3a3a3a"/>
<rect x="774" y="56" width="1" height="5" fill="#3a3a3a"/>
<rect x="783" y="56" width="1" height="5" fill="#3a3a3a"/>
<rect x="793" y="56" width="1" height="5" fill="#3a3a3a"/>
<rect x="802" y="39" width="1" height="22" fill="#3a3a3a"/>
<text x="804.5" y="52" font-size="11" fill="#3c3c3c">150</text>
<rect x="812" y="56" width="1" height="5" fill="#3a3a3a"/>
<rect x="821" y="56" width="1" height="5" fill="#3a3a3a"/>
<rect x="831" y="56" width="1" height="5" fill="#3a3a3a"/>
<rect x="840" y="56" width="1" height="5" fill="#3a3a3a"/>
<rect x="849" y="53" width="1" height="8" fill="#3a3a3a"/>
<rect x="859" y="56" width="1" height="5" fill="#3a3a3a"/>
<rect x="868" y="56" width="1" height="5" fill="#3a3a3a"/>
<rect x="878" y="56" width="1" height="5" fill="#3a3a3a"/>
<rect x="887" y="56" width="1" height="5" fill="#3a3a3a"/>
<rect x="897" y="39" width="1" height="22" fill="#3a3a3a"/>
<text x="899.5" y="52" font-size="11" fill="#3c3c3c">200</text>
<rect x="906" y="56" width="1" height="5" fill="#3a3a3a"/>
<rect x="915" y="56" width="1" height="5" fill="#3a3a3a"/>
<rect x="925" y="56" width="1" height="5" fill="#3a3a3a"/>
<rect x="934" y="56" width="1" height="5" fill="#3a3a3a"/>
<rect x="944" y="53" width="1" height="8" fill="#3a3a3a"/>
<rect x="953" y="56" width="1" height="5" fill="#3a3a3a"/>
<rect x="962" y="56" width="1" height="5" fill="#3a3a3a"/>
<rect x="972" y="56" width="1" height="5" fill="#3a3a3a"/>
<rect x="981" y="56" width="1" height="5" fill="#3a3a3a"/>
<rect x="991" y="39" width="1" height="22" fill="#3a3a3a"/>
<text x="993.5" y="52" font-size="11" fill="#3c3c3c">250</text>
<rect x="1000" y="56" width="1" height="5" fill="#3a3a3a"/>
<rect x="1010" y="56" width="1" height="5" fill="#3a3a3a"/>
<rect x="1019" y="56" width="1" height="5" fill="#3a3a3a"/>
<rect x="1028" y="56" width="1" height="5" fill="#3a3a3a"/>
<rect x="1038" y="53" width="1" height="8" fill="#3a3a3a"/>
<rect x="1047" y="56" width="1" height="5" fill="#3a3a3a"/>
<rect x="1057" y="56" width="1" height="5" fill="#3a3a3a"/>
<rect x="1066" y="56" width="1" height="5" fill="#3a3a3a"/>
<rect x="1076" y="56" width="1" height="5" fill="#3a3a3a"/>
<rect x="1085" y="39" width="1" height="22" fill="#3a3a3a"/>
<text x="1087.5" y="52" font-size="11" fill="#3c3c3c">300</text>
<rect x="1094" y="56" width="1" height="5" fill="#3a3a3a"/>
<rect x="1104" y="56" width="1" height="5" fill="#3a3a3a"/>
<rect x="485" y="66" width="5" height="1" fill="#3a3a3a"/>
<rect x="485" y="75" width="5" height="1" fill="#3a3a3a"/>
<rect x="482" y="84" width="8" height="1" fill="#3a3a3a"/>
<rect x="485" y="94" width="5" height="1" fill="#3a3a3a"/>
<rect x="485" y="103" width="5" height="1" fill="#3a3a3a"/>
<rect x="485" y="113" width="5" height="1" fill="#3a3a3a"/>
<rect x="485" y="122" width="5" height="1" fill="#3a3a3a"/>
<rect x="468" y="132" width="22" height="1" fill="#3a3a3a"/>
<text transform="translate(481.3,136.5) rotate(-90)" text-anchor="end" font-size="11" fill="#3c3c3c">0</text>
<rect x="485" y="141" width="5" height="1" fill="#3a3a3a"/>
<rect x="485" y="151" width="5" height="1" fill="#3a3a3a"/>
<rect x="485" y="160" width="5" height="1" fill="#3a3a3a"/>
<rect x="485" y="170" width="5" height="1" fill="#3a3a3a"/>
<rect x="482" y="179" width="8" height="1" fill="#3a3a3a"/>
<rect x="485" y="188" width="5" height="1" fill="#3a3a3a"/>
<rect x="485" y="198" width="5" height="1" fill="#3a3a3a"/>
<rect x="485" y="207" width="5" height="1" fill="#3a3a3a"/>
<rect x="485" y="217" width="5" height="1" fill="#3a3a3a"/>
<rect x="468" y="226" width="22" height="1" fill="#3a3a3a"/>
<text transform="translate(481.3,230.5) rotate(-90)" text-anchor="end" font-size="11" fill="#3c3c3c">50</text>
<rect x="485" y="235" width="5" height="1" fill="#3a3a3a"/>
<rect x="485" y="245" width="5" height="1" fill="#3a3a3a"/>
<rect x="485" y="254" width="5" height="1" fill="#3a3a3a"/>
<rect x="485" y="264" width="5" height="1" fill="#3a3a3a"/>
<rect x="482" y="273" width="8" height="1" fill="#3a3a3a"/>
<rect x="485" y="283" width="5" height="1" fill="#3a3a3a"/>
<rect x="485" y="292" width="5" height="1" fill="#3a3a3a"/>
<rect x="485" y="301" width="5" height="1" fill="#3a3a3a"/>
<rect x="485" y="311" width="5" height="1" fill="#3a3a3a"/>
<rect x="468" y="320" width="22" height="1" fill="#3a3a3a"/>
<text transform="translate(481.3,324.5) rotate(-90)" text-anchor="end" font-size="11" fill="#3c3c3c">100</text>
<rect x="485" y="330" width="5" height="1" fill="#3a3a3a"/>
<rect x="485" y="339" width="5" height="1" fill="#3a3a3a"/>
<rect x="485" y="349" width="5" height="1" fill="#3a3a3a"/>
<rect x="485" y="358" width="5" height="1" fill="#3a3a3a"/>
<rect x="482" y="367" width="8" height="1" fill="#3a3a3a"/>
<rect x="485" y="377" width="5" height="1" fill="#3a3a3a"/>
<rect x="485" y="386" width="5" height="1" fill="#3a3a3a"/>
<rect x="485" y="396" width="5" height="1" fill="#3a3a3a"/>
<rect x="485" y="405" width="5" height="1" fill="#3a3a3a"/>
<rect x="468" y="414" width="22" height="1" fill="#3a3a3a"/>
<text transform="translate(481.3,418.5) rotate(-90)" text-anchor="end" font-size="11" fill="#3c3c3c">150</text>
<rect x="485" y="424" width="5" height="1" fill="#3a3a3a"/>
<rect x="485" y="433" width="5" height="1" fill="#3a3a3a"/>
<rect x="485" y="443" width="5" height="1" fill="#3a3a3a"/>
<rect x="485" y="452" width="5" height="1" fill="#3a3a3a"/>
<rect x="482" y="462" width="8" height="1" fill="#3a3a3a"/>
<rect x="485" y="471" width="5" height="1" fill="#3a3a3a"/>
<rect x="485" y="480" width="5" height="1" fill="#3a3a3a"/>
<rect x="485" y="490" width="5" height="1" fill="#3a3a3a"/>
<rect x="485" y="499" width="5" height="1" fill="#3a3a3a"/>
<rect x="468" y="509" width="22" height="1" fill="#3a3a3a"/>
<text transform="translate(481.3,513.5) rotate(-90)" text-anchor="end" font-size="11" fill="#3c3c3c">200</text>
<rect x="485" y="518" width="5" height="1" fill="#3a3a3a"/>
<rect x="485" y="527" width="5" height="1" fill="#3a3a3a"/>
<rect x="485" y="537" width="5" height="1" fill="#3a3a3a"/>
<rect x="485" y="546" width="5" height="1" fill="#3a3a3a"/>
<rect x="482" y="556" width="8" height="1" fill="#3a3a3a"/>
<rect x="485" y="565" width="5" height="1" fill="#3a3a3a"/>
<rect x="485" y="575" width="5" height="1" fill="#3a3a3a"/>
<rect x="485" y="584" width="5" height="1" fill="#3a3a3a"/>
<rect x="485" y="593" width="5" height="1" fill="#3a3a3a"/>
<rect x="468" y="589" width="22" height="1" fill="#f00"/>
<path d="M465.500 313v18" stroke="#bcb8b3" stroke-width="1" stroke-dasharray="1 2"/>
</svg>
<svg id="map" width="512" height="298" style="left:548px;top:205px" viewBox="548 205 512 298">
<defs><filter id="mb2" x="-5%" y="-5%" width="110%" height="110%"><feGaussianBlur stdDeviation="1.2"/></filter><filter id="mb" x="-5%" y="-5%" width="110%" height="110%"><feGaussianBlur stdDeviation="2.1"/></filter>
<clipPath id="mapclip"><rect x="549.5" y="206.5" width="509.0" height="295.0"/></clipPath>
<clipPath id="c_tam"><path d="M631.8 191.5L638.5 213.4L653.5 215.9L668.5 214.2L685.0 212.5L700.0 212.0L709.0 213.0L713.5 215.0L712.5 191.5Z"/></clipPath>
<clipPath id="c_slp"><path d="M534.5 191.5L631.8 191.5L638.5 213.4L653.5 215.9L668.5 214.2L678.6 217.5L683.6 221.7L683.6 226.7L672.0 237.6L677.0 246.7L670.0 255.0L673.5 266.8L672.7 273.5L668.5 277.6L661.9 278.5L651.8 275.1L645.2 274.3L642.7 263.4L639.3 255.1L635.0 256.8L628.5 261.8L615.0 261.8L606.8 263.4L595.0 260.1L583.4 255.9L573.4 253.4L566.7 261.8L558.4 260.1L534.5 253.4Z"/></clipPath>
<clipPath id="c_gto"><path d="M534.5 253.4L558.4 260.1L566.7 261.8L573.4 253.4L583.4 255.9L595.0 260.1L606.8 263.4L606.8 273.5L610.0 277.6L601.8 280.0L593.4 281.8L588.4 290.0L578.4 291.8L570.0 293.5L565.5 300.0L566.7 308.4L570.0 318.4L576.7 330.0L576.7 333.4L575.9 345.0L566.7 346.8L534.5 345.0Z"/></clipPath>
<clipPath id="c_qro"><path d="M606.8 263.4L615.0 261.8L628.5 261.8L635.0 256.8L639.3 255.1L642.7 263.4L645.2 274.3L643.5 278.5L631.8 283.5L628.5 293.5L623.5 300.0L611.8 310.0L606.0 317.5L605.0 326.0L603.4 327.6L595.0 338.4L589.0 345.0L586.0 336.7L580.0 331.7L576.7 333.4L576.7 330.0L570.0 318.4L566.7 308.4L565.5 300.0L570.0 293.5L578.4 291.8L588.4 290.0L593.4 281.8L601.8 280.0L610.0 277.6L606.8 273.5L606.8 263.4Z"/></clipPath>
<clipPath id="c_hgo"><path d="M645.2 274.3L651.8 275.1L661.9 278.5L668.5 277.6L672.7 273.5L676.0 271.0L680.0 277.0L690.0 281.0L694.0 287.0L688.0 293.0L680.0 296.0L675.7 304.0L674.0 313.0L675.0 318.0L682.0 315.0L690.0 310.0L698.0 305.0L703.0 307.0L698.0 318.0L696.0 325.0L693.0 331.0L696.0 337.0L692.0 347.0L691.0 355.0L694.0 361.0L690.0 361.8L678.5 363.5L669.0 364.0L670.2 358.4L665.2 354.3L655.2 351.8L651.8 343.4L645.2 341.8L638.5 346.8L630.0 355.0L625.0 350.0L620.0 340.0L611.8 333.4L603.4 327.6L605.0 326.0L606.0 317.5L611.8 310.0L623.5 300.0L628.5 293.5L631.8 283.5L643.5 278.5L645.2 274.3Z"/></clipPath>
<clipPath id="c_mich"><path d="M534.5 345.0L566.7 346.8L575.9 345.0L576.7 333.4L580.0 331.7L586.0 336.7L589.0 345.0L586.7 356.8L585.0 370.0L581.0 378.5L576.7 390.0L563.4 404.2L555.0 406.7L556.7 416.7L553.4 422.6L534.5 423.0Z"/></clipPath>
<clipPath id="c_mex"><path d="M603.4 327.6L611.8 333.4L620.0 340.0L625.0 350.0L630.0 355.0L638.5 346.8L645.2 341.8L651.8 343.4L655.2 351.8L665.2 354.3L670.2 358.4L669.0 364.0L669.5 369.0L668.5 380.0L668.5 390.0L667.7 398.4L660.2 396.7L653.5 392.5L648.5 392.5L638.5 391.7L632.6 391.7L631.8 398.4L625.0 405.0L622.6 415.0L618.5 413.4L611.8 412.6L601.8 415.9L593.4 417.6L586.7 423.4L580.0 429.2L576.7 418.4L570.0 408.4L563.4 404.2L576.7 390.0L581.0 378.5L585.0 370.0L586.7 356.8L589.0 345.0L595.0 338.4L603.4 327.6Z"/></clipPath>
<clipPath id="c_df"><path d="M641.8 368.0L635.0 373.0L632.0 380.0L632.6 388.4L638.5 391.7L648.5 392.5L652.0 386.7L651.0 380.0L648.0 373.0Z"/></clipPath>
<clipPath id="c_tlax"><path d="M669.0 364.0L678.5 363.5L690.0 361.8L695.0 360.0L703.6 365.0L712.0 370.0L722.0 376.8L724.0 381.0L718.6 382.5L710.0 385.0L700.0 386.7L690.0 390.0L683.6 385.0L680.0 380.0L674.0 373.0L669.5 369.0Z"/></clipPath>
<clipPath id="c_mor"><path d="M622.6 415.0L625.0 405.0L631.8 398.4L632.6 391.7L638.5 391.7L648.5 392.5L653.5 392.5L660.2 396.7L667.7 398.4L665.2 405.0L663.5 411.7L666.0 420.0L666.9 427.6L658.5 428.4L648.5 430.0L646.0 429.2L643.5 425.0L638.5 422.6L633.5 426.0L626.8 420.9L622.6 415.0Z"/></clipPath>
<clipPath id="c_gro"><path d="M534.5 423.0L553.4 422.6L556.7 416.7L555.0 406.7L563.4 404.2L570.0 408.4L576.7 418.4L580.0 429.2L586.7 423.4L593.4 417.6L601.8 415.9L611.8 412.6L618.5 413.4L622.6 415.0L626.8 420.9L633.5 426.0L638.5 422.6L643.5 425.0L646.0 429.2L648.5 436.8L658.5 445.0L671.9 451.0L683.6 455.0L682.3 470.0L684.6 481.7L694.0 493.5L701.0 516.5L534.5 516.5Z"/></clipPath>
<clipPath id="c_pue"><path d="M703.0 307.0L706.0 303.0L710.0 301.0L716.0 304.0L718.0 311.0L724.0 313.0L726.0 319.0L718.0 321.0L716.0 325.0L724.0 331.0L736.0 336.0L748.0 335.0L746.0 345.0L740.0 351.0L742.0 361.0L737.0 369.0L744.0 376.0L755.0 380.0L746.0 387.0L741.8 398.4L736.7 408.4L741.8 415.0L750.0 421.7L761.8 423.4L771.8 428.4L766.8 435.0L756.8 443.4L745.0 443.4L731.7 451.0L721.7 441.8L720.0 433.4L713.4 441.8L715.0 450.0L708.4 455.0L698.3 450.0L690.0 453.4L683.6 455.0L671.9 451.0L658.5 445.0L648.5 436.8L646.0 429.2L648.5 430.0L658.5 428.4L666.9 427.6L666.0 420.0L663.5 411.7L665.2 405.0L667.7 398.4L668.5 390.0L668.5 380.0L669.5 369.0L674.0 373.0L680.0 380.0L683.6 385.0L690.0 390.0L700.0 386.7L710.0 385.0L718.6 382.5L724.0 381.0L722.0 376.8L712.0 370.0L703.6 365.0L695.0 360.0L694.0 361.0L691.0 355.0L692.0 347.0L696.0 337.0L693.0 331.0L696.0 325.0L698.0 318.0L703.0 307.0Z"/></clipPath>
<clipPath id="c_oax"><path d="M701.0 516.5L694.0 493.5L684.6 481.7L682.3 470.0L683.6 455.0L690.0 453.4L698.3 450.0L708.4 455.0L715.0 450.0L713.4 441.8L720.0 433.4L721.7 441.8L731.7 451.0L745.0 443.4L756.8 443.4L766.8 435.0L771.8 428.4L776.0 418.4L785.2 423.4L793.5 433.4L803.5 441.8L816.9 446.8L818.5 455.0L813.5 461.8L823.5 470.0L840.2 475.0L852.0 466.8L855.3 473.5L861.5 482.0L865.4 491.7L875.0 498.0L900.0 500.5L924.9 516.5Z"/></clipPath>
<clipPath id="c_ver"><path d="M713.5 215.0L715.0 223.4L717.5 233.4L726.0 248.4L735.0 254.0L740.0 258.4L738.4 270.0L741.8 282.0L743.4 291.7L747.6 303.4L756.8 315.0L768.5 328.4L781.0 341.8L790.2 356.8L795.2 373.5L799.0 381.0L806.9 390.0L816.9 401.7L831.9 411.7L850.0 415.0L869.2 420.7L888.4 434.1L896.0 439.0L907.6 438.5L913.3 447.6L917.2 461.0L930.6 470.6L938.3 476.4L940.2 483.0L934.5 489.8L926.8 497.5L924.9 516.5L900.0 500.5L875.0 498.0L865.4 491.7L861.5 482.0L855.3 473.5L852.0 466.8L840.2 475.0L823.5 470.0L813.5 461.8L818.5 455.0L816.9 446.8L803.5 441.8L793.5 433.4L785.2 423.4L776.0 418.4L771.8 428.4L761.8 423.4L750.0 421.7L741.8 415.0L736.7 408.4L741.8 398.4L746.0 387.0L755.0 380.0L744.0 376.0L737.0 369.0L742.0 361.0L740.0 351.0L746.0 345.0L748.0 335.0L736.0 336.0L724.0 331.0L716.0 325.0L718.0 321.0L726.0 319.0L724.0 313.0L718.0 311.0L716.0 304.0L710.0 301.0L706.0 303.0L703.0 307.0L698.0 305.0L690.0 310.0L682.0 315.0L675.0 318.0L674.0 313.0L675.7 304.0L680.0 296.0L688.0 293.0L694.0 287.0L690.0 281.0L680.0 277.0L676.0 271.0L672.7 273.5L673.5 266.8L670.0 255.0L677.0 246.7L672.0 237.6L683.6 226.7L683.6 221.7L678.6 217.5L668.5 214.2L685.0 212.5L700.0 212.0L709.0 213.0L713.5 215.0Z"/></clipPath>
<clipPath id="c_tab"><path d="M907.6 438.5L911.4 436.0L930.6 430.3L949.8 426.5L969.0 425.5L984.4 420.7L999.5 415.3L1001.0 420.6L1005.5 425.0L1016.0 426.6L1016.8 440.0L1020.6 446.0L1031.0 452.0L1043.0 452.0L1046.0 446.0L1073.5 444.6L1073.5 484.0L1049.6 478.3L1040.0 470.6L1036.2 459.0L1026.6 457.2L1013.1 466.8L1003.6 470.6L992.0 480.2L982.4 484.0L972.8 474.5L969.0 457.2L961.3 452.4L953.6 454.3L946.0 466.8L940.2 483.0L938.3 476.4L930.6 470.6L917.2 461.0L913.3 447.6L907.6 438.5Z"/></clipPath>
<clipPath id="c_camp"><path d="M999.5 415.3L1017.6 413.8L1031.0 412.3L1043.0 407.0L1052.0 402.5L1073.5 399.5L1073.5 444.6L1046.0 446.0L1043.0 452.0L1031.0 452.0L1020.6 446.0L1016.8 440.0L1016.0 426.6L1005.5 425.0L1001.0 420.6Z"/></clipPath>
<clipPath id="c_chis"><path d="M924.9 516.5L926.8 497.5L934.5 489.8L940.2 483.0L946.0 466.8L953.6 454.3L961.3 452.4L969.0 457.2L972.8 474.5L982.4 484.0L992.0 480.2L1003.6 470.6L1013.1 466.8L1026.6 457.2L1036.2 459.0L1040.0 470.6L1049.6 478.3L1073.5 484.0L1073.5 516.5Z"/></clipPath>
<clipPath id="c_sea"><path d="M712.5 206.5L713.5 215.0L715.0 223.4L717.5 233.4L726.0 248.4L735.0 254.0L740.0 258.4L738.4 270.0L741.8 282.0L743.4 291.7L747.6 303.4L756.8 315.0L768.5 328.4L781.0 341.8L790.2 356.8L795.2 373.5L799.0 381.0L806.9 390.0L816.9 401.7L831.9 411.7L850.0 415.0L869.2 420.7L888.4 434.1L896.0 439.0L907.6 438.5L911.4 436.0L930.6 430.3L949.8 426.5L969.0 425.5L984.4 420.7L999.5 415.3L1017.6 413.8L1031.0 412.3L1043.0 407.0L1052.0 402.5L1058.5 399.5L1058.5 206.5Z"/></clipPath>
</defs>
<g clip-path="url(#mapclip)"><rect x="549.5" y="206.5" width="509.0" height="295.0" fill="#f2f2f2"/>
<g clip-path="url(#c_tam)"><path d="M631.8 191.5L638.5 213.4L653.5 215.9L668.5 214.2L685.0 212.5L700.0 212.0L709.0 213.0L713.5 215.0L712.5 191.5Z" fill="#f3f3f3" stroke="#e4c0e4" stroke-width="5" stroke-linejoin="round" filter="url(#mb)"/><path d="M631.8 191.5L638.5 213.4L653.5 215.9L668.5 214.2L685.0 212.5L700.0 212.0L709.0 213.0L713.5 215.0L712.5 191.5Z" fill="none" stroke="#dcaadc" stroke-width="3.200" stroke-linejoin="round" opacity=".22" filter="url(#mb2)"/></g>
<g clip-path="url(#c_slp)"><path d="M534.5 191.5L631.8 191.5L638.5 213.4L653.5 215.9L668.5 214.2L678.6 217.5L683.6 221.7L683.6 226.7L672.0 237.6L677.0 246.7L670.0 255.0L673.5 266.8L672.7 273.5L668.5 277.6L661.9 278.5L651.8 275.1L645.2 274.3L642.7 263.4L639.3 255.1L635.0 256.8L628.5 261.8L615.0 261.8L606.8 263.4L595.0 260.1L583.4 255.9L573.4 253.4L566.7 261.8L558.4 260.1L534.5 253.4Z" fill="#f3f3f3" stroke="#f5d8c0" stroke-width="5" stroke-linejoin="round" filter="url(#mb)"/><path d="M534.5 191.5L631.8 191.5L638.5 213.4L653.5 215.9L668.5 214.2L678.6 217.5L683.6 221.7L683.6 226.7L672.0 237.6L677.0 246.7L670.0 255.0L673.5 266.8L672.7 273.5L668.5 277.6L661.9 278.5L651.8 275.1L645.2 274.3L642.7 263.4L639.3 255.1L635.0 256.8L628.5 261.8L615.0 261.8L606.8 263.4L595.0 260.1L583.4 255.9L573.4 253.4L566.7 261.8L558.4 260.1L534.5 253.4Z" fill="none" stroke="#f0c8a8" stroke-width="3.200" stroke-linejoin="round" opacity=".22" filter="url(#mb2)"/></g>
<g clip-path="url(#c_gto)"><path d="M534.5 253.4L558.4 260.1L566.7 261.8L573.4 253.4L583.4 255.9L595.0 260.1L606.8 263.4L606.8 273.5L610.0 277.6L601.8 280.0L593.4 281.8L588.4 290.0L578.4 291.8L570.0 293.5L565.5 300.0L566.7 308.4L570.0 318.4L576.7 330.0L576.7 333.4L575.9 345.0L566.7 346.8L534.5 345.0Z" fill="#f3f3f3" stroke="#c0c8f2" stroke-width="5" stroke-linejoin="round" filter="url(#mb)"/><path d="M534.5 253.4L558.4 260.1L566.7 261.8L573.4 253.4L583.4 255.9L595.0 260.1L606.8 263.4L606.8 273.5L610.0 277.6L601.8 280.0L593.4 281.8L588.4 290.0L578.4 291.8L570.0 293.5L565.5 300.0L566.7 308.4L570.0 318.4L576.7 330.0L576.7 333.4L575.9 345.0L566.7 346.8L534.5 345.0Z" fill="none" stroke="#a8b4ee" stroke-width="3.200" stroke-linejoin="round" opacity=".22" filter="url(#mb2)"/></g>
<g clip-path="url(#c_qro)"><path d="M606.8 263.4L615.0 261.8L628.5 261.8L635.0 256.8L639.3 255.1L642.7 263.4L645.2 274.3L643.5 278.5L631.8 283.5L628.5 293.5L623.5 300.0L611.8 310.0L606.0 317.5L605.0 326.0L603.4 327.6L595.0 338.4L589.0 345.0L586.0 336.7L580.0 331.7L576.7 333.4L576.7 330.0L570.0 318.4L566.7 308.4L565.5 300.0L570.0 293.5L578.4 291.8L588.4 290.0L593.4 281.8L601.8 280.0L610.0 277.6L606.8 273.5L606.8 263.4Z" fill="#f3f3f3" stroke="#a8dccc" stroke-width="5" stroke-linejoin="round" filter="url(#mb)"/><path d="M606.8 263.4L615.0 261.8L628.5 261.8L635.0 256.8L639.3 255.1L642.7 263.4L645.2 274.3L643.5 278.5L631.8 283.5L628.5 293.5L623.5 300.0L611.8 310.0L606.0 317.5L605.0 326.0L603.4 327.6L595.0 338.4L589.0 345.0L586.0 336.7L580.0 331.7L576.7 333.4L576.7 330.0L570.0 318.4L566.7 308.4L565.5 300.0L570.0 293.5L578.4 291.8L588.4 290.0L593.4 281.8L601.8 280.0L610.0 277.6L606.8 273.5L606.8 263.4Z" fill="none" stroke="#88d0bc" stroke-width="3.200" stroke-linejoin="round" opacity=".22" filter="url(#mb2)"/></g>
<g clip-path="url(#c_hgo)"><path d="M645.2 274.3L651.8 275.1L661.9 278.5L668.5 277.6L672.7 273.5L676.0 271.0L680.0 277.0L690.0 281.0L694.0 287.0L688.0 293.0L680.0 296.0L675.7 304.0L674.0 313.0L675.0 318.0L682.0 315.0L690.0 310.0L698.0 305.0L703.0 307.0L698.0 318.0L696.0 325.0L693.0 331.0L696.0 337.0L692.0 347.0L691.0 355.0L694.0 361.0L690.0 361.8L678.5 363.5L669.0 364.0L670.2 358.4L665.2 354.3L655.2 351.8L651.8 343.4L645.2 341.8L638.5 346.8L630.0 355.0L625.0 350.0L620.0 340.0L611.8 333.4L603.4 327.6L605.0 326.0L606.0 317.5L611.8 310.0L623.5 300.0L628.5 293.5L631.8 283.5L643.5 278.5L645.2 274.3Z" fill="#f3f3f3" stroke="#d4e8b0" stroke-width="5" stroke-linejoin="round" filter="url(#mb)"/><path d="M645.2 274.3L651.8 275.1L661.9 278.5L668.5 277.6L672.7 273.5L676.0 271.0L680.0 277.0L690.0 281.0L694.0 287.0L688.0 293.0L680.0 296.0L675.7 304.0L674.0 313.0L675.0 318.0L682.0 315.0L690.0 310.0L698.0 305.0L703.0 307.0L698.0 318.0L696.0 325.0L693.0 331.0L696.0 337.0L692.0 347.0L691.0 355.0L694.0 361.0L690.0 361.8L678.5 363.5L669.0 364.0L670.2 358.4L665.2 354.3L655.2 351.8L651.8 343.4L645.2 341.8L638.5 346.8L630.0 355.0L625.0 350.0L620.0 340.0L611.8 333.4L603.4 327.6L605.0 326.0L606.0 317.5L611.8 310.0L623.5 300.0L628.5 293.5L631.8 283.5L643.5 278.5L645.2 274.3Z" fill="none" stroke="#c0dc90" stroke-width="3.200" stroke-linejoin="round" opacity=".22" filter="url(#mb2)"/></g>
<g clip-path="url(#c_mich)"><path d="M534.5 345.0L566.7 346.8L575.9 345.0L576.7 333.4L580.0 331.7L586.0 336.7L589.0 345.0L586.7 356.8L585.0 370.0L581.0 378.5L576.7 390.0L563.4 404.2L555.0 406.7L556.7 416.7L553.4 422.6L534.5 423.0Z" fill="#f3f3f3" stroke="#f5d8c0" stroke-width="5" stroke-linejoin="round" filter="url(#mb)"/><path d="M534.5 345.0L566.7 346.8L575.9 345.0L576.7 333.4L580.0 331.7L586.0 336.7L589.0 345.0L586.7 356.8L585.0 370.0L581.0 378.5L576.7 390.0L563.4 404.2L555.0 406.7L556.7 416.7L553.4 422.6L534.5 423.0Z" fill="none" stroke="#f0c8a8" stroke-width="3.200" stroke-linejoin="round" opacity=".22" filter="url(#mb2)"/></g>
<g clip-path="url(#c_mex)"><path d="M603.4 327.6L611.8 333.4L620.0 340.0L625.0 350.0L630.0 355.0L638.5 346.8L645.2 341.8L651.8 343.4L655.2 351.8L665.2 354.3L670.2 358.4L669.0 364.0L669.5 369.0L668.5 380.0L668.5 390.0L667.7 398.4L660.2 396.7L653.5 392.5L648.5 392.5L638.5 391.7L632.6 391.7L631.8 398.4L625.0 405.0L622.6 415.0L618.5 413.4L611.8 412.6L601.8 415.9L593.4 417.6L586.7 423.4L580.0 429.2L576.7 418.4L570.0 408.4L563.4 404.2L576.7 390.0L581.0 378.5L585.0 370.0L586.7 356.8L589.0 345.0L595.0 338.4L603.4 327.6Z" fill="#f3f3f3" stroke="#e4c0e4" stroke-width="5" stroke-linejoin="round" filter="url(#mb)"/><path d="M603.4 327.6L611.8 333.4L620.0 340.0L625.0 350.0L630.0 355.0L638.5 346.8L645.2 341.8L651.8 343.4L655.2 351.8L665.2 354.3L670.2 358.4L669.0 364.0L669.5 369.0L668.5 380.0L668.5 390.0L667.7 398.4L660.2 396.7L653.5 392.5L648.5 392.5L638.5 391.7L632.6 391.7L631.8 398.4L625.0 405.0L622.6 415.0L618.5 413.4L611.8 412.6L601.8 415.9L593.4 417.6L586.7 423.4L580.0 429.2L576.7 418.4L570.0 408.4L563.4 404.2L576.7 390.0L581.0 378.5L585.0 370.0L586.7 356.8L589.0 345.0L595.0 338.4L603.4 327.6Z" fill="none" stroke="#dcaadc" stroke-width="3.200" stroke-linejoin="round" opacity=".22" filter="url(#mb2)"/></g>
<g clip-path="url(#c_df)"><path d="M641.8 368.0L635.0 373.0L632.0 380.0L632.6 388.4L638.5 391.7L648.5 392.5L652.0 386.7L651.0 380.0L648.0 373.0Z" fill="#f3f3f3" stroke="#a8dccc" stroke-width="5" stroke-linejoin="round" filter="url(#mb)"/><path d="M641.8 368.0L635.0 373.0L632.0 380.0L632.6 388.4L638.5 391.7L648.5 392.5L652.0 386.7L651.0 380.0L648.0 373.0Z" fill="none" stroke="#88d0bc" stroke-width="3.200" stroke-linejoin="round" opacity=".22" filter="url(#mb2)"/></g>
<g clip-path="url(#c_tlax)"><path d="M669.0 364.0L678.5 363.5L690.0 361.8L695.0 360.0L703.6 365.0L712.0 370.0L722.0 376.8L724.0 381.0L718.6 382.5L710.0 385.0L700.0 386.7L690.0 390.0L683.6 385.0L680.0 380.0L674.0 373.0L669.5 369.0Z" fill="#f3f3f3" stroke="#a8dccc" stroke-width="5" stroke-linejoin="round" filter="url(#mb)"/><path d="M669.0 364.0L678.5 363.5L690.0 361.8L695.0 360.0L703.6 365.0L712.0 370.0L722.0 376.8L724.0 381.0L718.6 382.5L710.0 385.0L700.0 386.7L690.0 390.0L683.6 385.0L680.0 380.0L674.0 373.0L669.5 369.0Z" fill="none" stroke="#88d0bc" stroke-width="3.200" stroke-linejoin="round" opacity=".22" filter="url(#mb2)"/></g>
<g clip-path="url(#c_mor)"><path d="M622.6 415.0L625.0 405.0L631.8 398.4L632.6 391.7L638.5 391.7L648.5 392.5L653.5 392.5L660.2 396.7L667.7 398.4L665.2 405.0L663.5 411.7L666.0 420.0L666.9 427.6L658.5 428.4L648.5 430.0L646.0 429.2L643.5 425.0L638.5 422.6L633.5 426.0L626.8 420.9L622.6 415.0Z" fill="#f3f3f3" stroke="#f5d8c0" stroke-width="5" stroke-linejoin="round" filter="url(#mb)"/><path d="M622.6 415.0L625.0 405.0L631.8 398.4L632.6 391.7L638.5 391.7L648.5 392.5L653.5 392.5L660.2 396.7L667.7 398.4L665.2 405.0L663.5 411.7L666.0 420.0L666.9 427.6L658.5 428.4L648.5 430.0L646.0 429.2L643.5 425.0L638.5 422.6L633.5 426.0L626.8 420.9L622.6 415.0Z" fill="none" stroke="#f0c8a8" stroke-width="3.200" stroke-linejoin="round" opacity=".22" filter="url(#mb2)"/></g>
<g clip-path="url(#c_gro)"><path d="M534.5 423.0L553.4 422.6L556.7 416.7L555.0 406.7L563.4 404.2L570.0 408.4L576.7 418.4L580.0 429.2L586.7 423.4L593.4 417.6L601.8 415.9L611.8 412.6L618.5 413.4L622.6 415.0L626.8 420.9L633.5 426.0L638.5 422.6L643.5 425.0L646.0 429.2L648.5 436.8L658.5 445.0L671.9 451.0L683.6 455.0L682.3 470.0L684.6 481.7L694.0 493.5L701.0 516.5L534.5 516.5Z" fill="#f3f3f3" stroke="#c8e6b8" stroke-width="5" stroke-linejoin="round" filter="url(#mb)"/><path d="M534.5 423.0L553.4 422.6L556.7 416.7L555.0 406.7L563.4 404.2L570.0 408.4L576.7 418.4L580.0 429.2L586.7 423.4L593.4 417.6L601.8 415.9L611.8 412.6L618.5 413.4L622.6 415.0L626.8 420.9L633.5 426.0L638.5 422.6L643.5 425.0L646.0 429.2L648.5 436.8L658.5 445.0L671.9 451.0L683.6 455.0L682.3 470.0L684.6 481.7L694.0 493.5L701.0 516.5L534.5 516.5Z" fill="none" stroke="#b0dc9c" stroke-width="3.200" stroke-linejoin="round" opacity=".22" filter="url(#mb2)"/></g>
<g clip-path="url(#c_pue)"><path d="M703.0 307.0L706.0 303.0L710.0 301.0L716.0 304.0L718.0 311.0L724.0 313.0L726.0 319.0L718.0 321.0L716.0 325.0L724.0 331.0L736.0 336.0L748.0 335.0L746.0 345.0L740.0 351.0L742.0 361.0L737.0 369.0L744.0 376.0L755.0 380.0L746.0 387.0L741.8 398.4L736.7 408.4L741.8 415.0L750.0 421.7L761.8 423.4L771.8 428.4L766.8 435.0L756.8 443.4L745.0 443.4L731.7 451.0L721.7 441.8L720.0 433.4L713.4 441.8L715.0 450.0L708.4 455.0L698.3 450.0L690.0 453.4L683.6 455.0L671.9 451.0L658.5 445.0L648.5 436.8L646.0 429.2L648.5 430.0L658.5 428.4L666.9 427.6L666.0 420.0L663.5 411.7L665.2 405.0L667.7 398.4L668.5 390.0L668.5 380.0L669.5 369.0L674.0 373.0L680.0 380.0L683.6 385.0L690.0 390.0L700.0 386.7L710.0 385.0L718.6 382.5L724.0 381.0L722.0 376.8L712.0 370.0L703.6 365.0L695.0 360.0L694.0 361.0L691.0 355.0L692.0 347.0L696.0 337.0L693.0 331.0L696.0 325.0L698.0 318.0L703.0 307.0Z" fill="#f3f3f3" stroke="#c0c8f2" stroke-width="5" stroke-linejoin="round" filter="url(#mb)"/><path d="M703.0 307.0L706.0 303.0L710.0 301.0L716.0 304.0L718.0 311.0L724.0 313.0L726.0 319.0L718.0 321.0L716.0 325.0L724.0 331.0L736.0 336.0L748.0 335.0L746.0 345.0L740.0 351.0L742.0 361.0L737.0 369.0L744.0 376.0L755.0 380.0L746.0 387.0L741.8 398.4L736.7 408.4L741.8 415.0L750.0 421.7L761.8 423.4L771.8 428.4L766.8 435.0L756.8 443.4L745.0 443.4L731.7 451.0L721.7 441.8L720.0 433.4L713.4 441.8L715.0 450.0L708.4 455.0L698.3 450.0L690.0 453.4L683.6 455.0L671.9 451.0L658.5 445.0L648.5 436.8L646.0 429.2L648.5 430.0L658.5 428.4L666.9 427.6L666.0 420.0L663.5 411.7L665.2 405.0L667.7 398.4L668.5 390.0L668.5 380.0L669.5 369.0L674.0 373.0L680.0 380.0L683.6 385.0L690.0 390.0L700.0 386.7L710.0 385.0L718.6 382.5L724.0 381.0L722.0 376.8L712.0 370.0L703.6 365.0L695.0 360.0L694.0 361.0L691.0 355.0L692.0 347.0L696.0 337.0L693.0 331.0L696.0 325.0L698.0 318.0L703.0 307.0Z" fill="none" stroke="#a8b4ee" stroke-width="3.200" stroke-linejoin="round" opacity=".22" filter="url(#mb2)"/></g>
<g clip-path="url(#c_oax)"><path d="M701.0 516.5L694.0 493.5L684.6 481.7L682.3 470.0L683.6 455.0L690.0 453.4L698.3 450.0L708.4 455.0L715.0 450.0L713.4 441.8L720.0 433.4L721.7 441.8L731.7 451.0L745.0 443.4L756.8 443.4L766.8 435.0L771.8 428.4L776.0 418.4L785.2 423.4L793.5 433.4L803.5 441.8L816.9 446.8L818.5 455.0L813.5 461.8L823.5 470.0L840.2 475.0L852.0 466.8L855.3 473.5L861.5 482.0L865.4 491.7L875.0 498.0L900.0 500.5L924.9 516.5Z" fill="#f3f3f3" stroke="#e4c0e4" stroke-width="5" stroke-linejoin="round" filter="url(#mb)"/><path d="M701.0 516.5L694.0 493.5L684.6 481.7L682.3 470.0L683.6 455.0L690.0 453.4L698.3 450.0L708.4 455.0L715.0 450.0L713.4 441.8L720.0 433.4L721.7 441.8L731.7 451.0L745.0 443.4L756.8 443.4L766.8 435.0L771.8 428.4L776.0 418.4L785.2 423.4L793.5 433.4L803.5 441.8L816.9 446.8L818.5 455.0L813.5 461.8L823.5 470.0L840.2 475.0L852.0 466.8L855.3 473.5L861.5 482.0L865.4 491.7L875.0 498.0L900.0 500.5L924.9 516.5Z" fill="none" stroke="#dcaadc" stroke-width="3.200" stroke-linejoin="round" opacity=".22" filter="url(#mb2)"/></g>
<g clip-path="url(#c_ver)"><path d="M713.5 215.0L715.0 223.4L717.5 233.4L726.0 248.4L735.0 254.0L740.0 258.4L738.4 270.0L741.8 282.0L743.4 291.7L747.6 303.4L756.8 315.0L768.5 328.4L781.0 341.8L790.2 356.8L795.2 373.5L799.0 381.0L806.9 390.0L816.9 401.7L831.9 411.7L850.0 415.0L869.2 420.7L888.4 434.1L896.0 439.0L907.6 438.5L913.3 447.6L917.2 461.0L930.6 470.6L938.3 476.4L940.2 483.0L934.5 489.8L926.8 497.5L924.9 516.5L900.0 500.5L875.0 498.0L865.4 491.7L861.5 482.0L855.3 473.5L852.0 466.8L840.2 475.0L823.5 470.0L813.5 461.8L818.5 455.0L816.9 446.8L803.5 441.8L793.5 433.4L785.2 423.4L776.0 418.4L771.8 428.4L761.8 423.4L750.0 421.7L741.8 415.0L736.7 408.4L741.8 398.4L746.0 387.0L755.0 380.0L744.0 376.0L737.0 369.0L742.0 361.0L740.0 351.0L746.0 345.0L748.0 335.0L736.0 336.0L724.0 331.0L716.0 325.0L718.0 321.0L726.0 319.0L724.0 313.0L718.0 311.0L716.0 304.0L710.0 301.0L706.0 303.0L703.0 307.0L698.0 305.0L690.0 310.0L682.0 315.0L675.0 318.0L674.0 313.0L675.7 304.0L680.0 296.0L688.0 293.0L694.0 287.0L690.0 281.0L680.0 277.0L676.0 271.0L672.7 273.5L673.5 266.8L670.0 255.0L677.0 246.7L672.0 237.6L683.6 226.7L683.6 221.7L678.6 217.5L668.5 214.2L685.0 212.5L700.0 212.0L709.0 213.0L713.5 215.0Z" fill="#f3f3f3" stroke="#a8dccc" stroke-width="5" stroke-linejoin="round" filter="url(#mb)"/><path d="M713.5 215.0L715.0 223.4L717.5 233.4L726.0 248.4L735.0 254.0L740.0 258.4L738.4 270.0L741.8 282.0L743.4 291.7L747.6 303.4L756.8 315.0L768.5 328.4L781.0 341.8L790.2 356.8L795.2 373.5L799.0 381.0L806.9 390.0L816.9 401.7L831.9 411.7L850.0 415.0L869.2 420.7L888.4 434.1L896.0 439.0L907.6 438.5L913.3 447.6L917.2 461.0L930.6 470.6L938.3 476.4L940.2 483.0L934.5 489.8L926.8 497.5L924.9 516.5L900.0 500.5L875.0 498.0L865.4 491.7L861.5 482.0L855.3 473.5L852.0 466.8L840.2 475.0L823.5 470.0L813.5 461.8L818.5 455.0L816.9 446.8L803.5 441.8L793.5 433.4L785.2 423.4L776.0 418.4L771.8 428.4L761.8 423.4L750.0 421.7L741.8 415.0L736.7 408.4L741.8 398.4L746.0 387.0L755.0 380.0L744.0 376.0L737.0 369.0L742.0 361.0L740.0 351.0L746.0 345.0L748.0 335.0L736.0 336.0L724.0 331.0L716.0 325.0L718.0 321.0L726.0 319.0L724.0 313.0L718.0 311.0L716.0 304.0L710.0 301.0L706.0 303.0L703.0 307.0L698.0 305.0L690.0 310.0L682.0 315.0L675.0 318.0L674.0 313.0L675.7 304.0L680.0 296.0L688.0 293.0L694.0 287.0L690.0 281.0L680.0 277.0L676.0 271.0L672.7 273.5L673.5 266.8L670.0 255.0L677.0 246.7L672.0 237.6L683.6 226.7L683.6 221.7L678.6 217.5L668.5 214.2L685.0 212.5L700.0 212.0L709.0 213.0L713.5 215.0Z" fill="none" stroke="#88d0bc" stroke-width="3.200" stroke-linejoin="round" opacity=".22" filter="url(#mb2)"/></g>
<g clip-path="url(#c_tab)"><path d="M907.6 438.5L911.4 436.0L930.6 430.3L949.8 426.5L969.0 425.5L984.4 420.7L999.5 415.3L1001.0 420.6L1005.5 425.0L1016.0 426.6L1016.8 440.0L1020.6 446.0L1031.0 452.0L1043.0 452.0L1046.0 446.0L1073.5 444.6L1073.5 484.0L1049.6 478.3L1040.0 470.6L1036.2 459.0L1026.6 457.2L1013.1 466.8L1003.6 470.6L992.0 480.2L982.4 484.0L972.8 474.5L969.0 457.2L961.3 452.4L953.6 454.3L946.0 466.8L940.2 483.0L938.3 476.4L930.6 470.6L917.2 461.0L913.3 447.6L907.6 438.5Z" fill="#f3f3f3" stroke="#f5d8c0" stroke-width="5" stroke-linejoin="round" filter="url(#mb)"/><path d="M907.6 438.5L911.4 436.0L930.6 430.3L949.8 426.5L969.0 425.5L984.4 420.7L999.5 415.3L1001.0 420.6L1005.5 425.0L1016.0 426.6L1016.8 440.0L1020.6 446.0L1031.0 452.0L1043.0 452.0L1046.0 446.0L1073.5 444.6L1073.5 484.0L1049.6 478.3L1040.0 470.6L1036.2 459.0L1026.6 457.2L1013.1 466.8L1003.6 470.6L992.0 480.2L982.4 484.0L972.8 474.5L969.0 457.2L961.3 452.4L953.6 454.3L946.0 466.8L940.2 483.0L938.3 476.4L930.6 470.6L917.2 461.0L913.3 447.6L907.6 438.5Z" fill="none" stroke="#f0c8a8" stroke-width="3.200" stroke-linejoin="round" opacity=".22" filter="url(#mb2)"/></g>
<g clip-path="url(#c_camp)"><path d="M999.5 415.3L1017.6 413.8L1031.0 412.3L1043.0 407.0L1052.0 402.5L1073.5 399.5L1073.5 444.6L1046.0 446.0L1043.0 452.0L1031.0 452.0L1020.6 446.0L1016.8 440.0L1016.0 426.6L1005.5 425.0L1001.0 420.6Z" fill="#f3f3f3" stroke="#c0c8f2" stroke-width="5" stroke-linejoin="round" filter="url(#mb)"/><path d="M999.5 415.3L1017.6 413.8L1031.0 412.3L1043.0 407.0L1052.0 402.5L1073.5 399.5L1073.5 444.6L1046.0 446.0L1043.0 452.0L1031.0 452.0L1020.6 446.0L1016.8 440.0L1016.0 426.6L1005.5 425.0L1001.0 420.6Z" fill="none" stroke="#a8b4ee" stroke-width="3.200" stroke-linejoin="round" opacity=".22" filter="url(#mb2)"/></g>
<g clip-path="url(#c_chis)"><path d="M924.9 516.5L926.8 497.5L934.5 489.8L940.2 483.0L946.0 466.8L953.6 454.3L961.3 452.4L969.0 457.2L972.8 474.5L982.4 484.0L992.0 480.2L1003.6 470.6L1013.1 466.8L1026.6 457.2L1036.2 459.0L1040.0 470.6L1049.6 478.3L1073.5 484.0L1073.5 516.5Z" fill="#f3f3f3" stroke="#c8e6b8" stroke-width="5" stroke-linejoin="round" filter="url(#mb)"/><path d="M924.9 516.5L926.8 497.5L934.5 489.8L940.2 483.0L946.0 466.8L953.6 454.3L961.3 452.4L969.0 457.2L972.8 474.5L982.4 484.0L992.0 480.2L1003.6 470.6L1013.1 466.8L1026.6 457.2L1036.2 459.0L1040.0 470.6L1049.6 478.3L1073.5 484.0L1073.5 516.5Z" fill="none" stroke="#b0dc9c" stroke-width="3.200" stroke-linejoin="round" opacity=".22" filter="url(#mb2)"/></g>
<path d="M549.5 420L553 422L562 429L563 431.5L557 432.5L549.5 428Z" fill="#f5d8c0" opacity=".7" filter="url(#mb)"/>
<path d="M712.2 200.5C712.2 201.5 712.3 204.1 712.5 206.5C712.7 208.9 713.1 212.2 713.5 215.0C713.9 217.8 714.3 220.3 715.0 223.4C715.7 226.5 715.7 229.2 717.5 233.4C719.3 237.6 723.1 245.0 726.0 248.4C728.9 251.8 732.7 252.3 735.0 254.0C737.3 255.7 739.4 255.7 740.0 258.4C740.6 261.1 738.1 266.1 738.4 270.0C738.7 273.9 741.0 278.4 741.8 282.0C742.6 285.6 742.4 288.1 743.4 291.7C744.4 295.3 745.4 299.5 747.6 303.4C749.8 307.3 753.3 310.8 756.8 315.0C760.3 319.2 764.5 323.9 768.5 328.4C772.5 332.9 777.4 337.1 781.0 341.8C784.6 346.5 787.8 351.5 790.2 356.8C792.6 362.1 793.7 369.5 795.2 373.5C796.7 377.5 797.0 378.2 799.0 381.0C801.0 383.8 803.9 386.6 806.9 390.0C809.9 393.4 812.7 398.1 816.9 401.7C821.1 405.3 826.4 409.5 831.9 411.7C837.4 413.9 843.8 413.5 850.0 415.0C856.2 416.5 862.8 417.5 869.2 420.7C875.6 423.9 883.9 431.1 888.4 434.1C892.9 437.2 892.8 438.3 896.0 439.0C899.2 439.7 905.0 439.0 907.6 438.5C910.2 438.0 907.6 437.4 911.4 436.0C915.2 434.6 924.2 431.9 930.6 430.3C937.0 428.7 943.4 427.3 949.8 426.5C956.2 425.7 963.2 426.5 969.0 425.5C974.8 424.5 979.3 422.4 984.4 420.7C989.5 419.0 994.0 416.4 999.5 415.3C1005.0 414.2 1012.4 414.3 1017.6 413.8C1022.9 413.3 1026.8 413.4 1031.0 412.3C1035.2 411.2 1039.5 408.6 1043.0 407.0C1046.5 405.4 1049.4 403.8 1052.0 402.5C1054.6 401.2 1056.1 400.5 1058.5 399.5C1060.9 398.5 1065.2 397.0 1066.5 396.5L1068.5 196.5Z" fill="#fff"/>
<path d="M714.4 200.4C714.4 201.4 714.5 203.9 714.7 206.3C714.9 208.7 715.3 211.9 715.7 214.7C716.1 217.4 716.5 220.0 717.1 222.9C717.8 225.9 717.8 228.5 719.5 232.5C721.3 236.5 724.9 243.7 727.7 247.0C730.5 250.3 733.9 250.4 736.3 252.2C738.7 254.0 741.4 255.0 742.2 257.9C742.9 260.9 740.3 265.9 740.6 269.8C740.9 273.8 743.1 278.0 743.9 281.5C744.8 285.1 744.6 287.7 745.5 291.1C746.5 294.6 747.3 298.6 749.5 302.3C751.7 306.0 755.1 309.5 758.5 313.6C761.9 317.7 766.1 322.4 770.1 326.9C774.2 331.4 779.1 335.6 782.7 340.5C786.4 345.3 789.8 350.5 792.2 355.9C794.6 361.3 795.8 368.8 797.3 372.7C798.7 376.7 798.9 377.1 800.8 379.7C802.7 382.4 805.6 385.2 808.6 388.6C811.5 391.9 814.3 396.5 818.3 400.0C822.4 403.6 827.4 407.5 832.7 409.7C838.1 411.8 844.3 411.3 850.5 412.9C856.8 414.4 863.7 415.5 870.2 418.7C876.7 422.0 885.3 429.3 889.6 432.3C894.0 435.3 893.6 436.2 896.5 436.9C899.4 437.5 904.8 436.8 907.2 436.3C909.5 435.9 906.8 435.3 910.7 433.9C914.5 432.6 923.6 429.8 930.1 428.2C936.5 426.6 943.1 425.1 949.5 424.3C956.0 423.5 962.9 424.3 968.6 423.3C974.3 422.4 978.6 420.3 983.7 418.6C988.8 416.9 993.4 414.3 999.1 413.1C1004.7 412.0 1012.2 412.1 1017.4 411.6C1022.6 411.1 1026.3 411.3 1030.4 410.2C1034.5 409.1 1038.6 406.6 1042.1 405.0C1045.5 403.4 1048.4 401.8 1051.0 400.5C1053.6 399.3 1055.2 398.5 1057.7 397.5C1060.1 396.5 1064.4 394.9 1065.7 394.4" fill="none" stroke="#bfe2d9" stroke-width=".8"/>
<path d="M716.6 200.3C716.6 201.3 716.7 203.8 716.9 206.1C717.1 208.5 717.4 211.6 717.9 214.4C718.3 217.1 718.7 219.6 719.3 222.5C719.9 225.3 719.9 227.8 721.5 231.6C723.2 235.5 726.7 242.4 729.4 245.6C732.0 248.7 735.1 248.4 737.6 250.4C740.0 252.4 743.4 254.3 744.3 257.5C745.2 260.7 742.5 265.7 742.8 269.7C743.1 273.6 745.3 277.5 746.1 281.0C746.9 284.5 746.8 287.2 747.6 290.5C748.5 293.9 749.3 297.6 751.4 301.2C753.5 304.8 756.8 308.1 760.2 312.2C763.6 316.2 767.7 321.0 771.8 325.5C775.8 329.9 780.8 334.2 784.5 339.1C788.2 344.1 791.7 349.5 794.2 355.0C796.7 360.5 797.9 368.1 799.3 372.0C800.7 375.9 800.8 375.9 802.6 378.5C804.4 381.0 807.4 383.8 810.2 387.1C813.1 390.4 815.9 395.0 819.8 398.4C823.7 401.8 828.3 405.6 833.5 407.6C838.7 409.7 844.8 409.2 851.0 410.7C857.3 412.2 864.5 413.5 871.2 416.8C877.8 420.1 886.6 427.5 890.9 430.5C895.2 433.5 894.3 434.1 897.0 434.7C899.6 435.3 904.6 434.7 906.8 434.2C908.9 433.7 906.1 433.2 909.9 431.9C913.7 430.5 923.0 427.6 929.5 426.0C936.1 424.4 942.8 422.9 949.3 422.1C955.7 421.3 962.6 422.1 968.3 421.2C973.9 420.2 977.9 418.2 983.0 416.5C988.1 414.8 992.9 412.2 998.6 411.0C1004.3 409.8 1012.0 409.9 1017.2 409.4C1022.4 408.9 1025.9 409.1 1029.9 408.0C1033.9 407.0 1037.8 404.6 1041.1 403.0C1044.5 401.4 1047.5 399.8 1050.1 398.5C1052.7 397.3 1054.3 396.5 1056.8 395.4C1059.3 394.4 1063.6 392.9 1065.0 392.4" fill="none" stroke="#d3ebe5" stroke-width=".8"/>
<path d="M712.2 200.5C712.2 201.5 712.3 204.1 712.5 206.5C712.7 208.9 713.1 212.2 713.5 215.0C713.9 217.8 714.3 220.3 715.0 223.4C715.7 226.5 715.7 229.2 717.5 233.4C719.3 237.6 723.1 245.0 726.0 248.4C728.9 251.8 732.7 252.3 735.0 254.0C737.3 255.7 739.4 255.7 740.0 258.4C740.6 261.1 738.1 266.1 738.4 270.0C738.7 273.9 741.0 278.4 741.8 282.0C742.6 285.6 742.4 288.1 743.4 291.7C744.4 295.3 745.4 299.5 747.6 303.4C749.8 307.3 753.3 310.8 756.8 315.0C760.3 319.2 764.5 323.9 768.5 328.4C772.5 332.9 777.4 337.1 781.0 341.8C784.6 346.5 787.8 351.5 790.2 356.8C792.6 362.1 793.7 369.5 795.2 373.5C796.7 377.5 797.0 378.2 799.0 381.0C801.0 383.8 803.9 386.6 806.9 390.0C809.9 393.4 812.7 398.1 816.9 401.7C821.1 405.3 826.4 409.5 831.9 411.7C837.4 413.9 843.8 413.5 850.0 415.0C856.2 416.5 862.8 417.5 869.2 420.7C875.6 423.9 883.9 431.1 888.4 434.1C892.9 437.2 892.8 438.3 896.0 439.0C899.2 439.7 905.0 439.0 907.6 438.5C910.2 438.0 907.6 437.4 911.4 436.0C915.2 434.6 924.2 431.9 930.6 430.3C937.0 428.7 943.4 427.3 949.8 426.5C956.2 425.7 963.2 426.5 969.0 425.5C974.8 424.5 979.3 422.4 984.4 420.7C989.5 419.0 994.0 416.4 999.5 415.3C1005.0 414.2 1012.4 414.3 1017.6 413.8C1022.9 413.3 1026.8 413.4 1031.0 412.3C1035.2 411.2 1039.5 408.6 1043.0 407.0C1046.5 405.4 1049.4 403.8 1052.0 402.5C1054.6 401.2 1056.1 400.5 1058.5 399.5C1060.9 398.5 1065.2 397.0 1066.5 396.5" fill="none" stroke="#a6d8cb" stroke-width=".6" opacity=".7"/>
<path d="M719.500 239L721 247L725 255L730 261L735 264.500L736.500 259.500L733 255L728.500 250L724 244L721 239.500Z" fill="#fff" stroke="#a9d6cc" stroke-width=".6"/>
<path d="M1033 418l10-2 9-3.500 6.500-4v9l-5.500 3.500-7 3-7 .8-3.500-1.300-.5 4-1.800-4.500-4-2.500z" fill="#fff" stroke="#b9cbe8" stroke-width=".6"/><path d="M1024 419.500l5-1 1.500 1.500-4 1.500z" fill="#fff"/>
<path d="M916 441.500l4-1.500.5 1-4 1.500zM929 437.500l5-1.800.5 1.200-5 1.800zM961 430l2-.5.500 1.800-2 .5z" fill="#fff"/>
<style>.st{font-size:7.200px;fill:#b9b9b9}.ct{font-size:6.600px;font-weight:bold;fill:#2c2c2c}.pt{font-size:6.400px;font-style:italic;fill:#3d62a8}.ap{font-size:6.600px;fill:#7a5236}</style>
<text x="617.1" y="230.4" class="st" text-anchor="middle">SAN</text>
<text x="617.1" y="240.6" class="st" text-anchor="middle">LUIS</text>
<text x="617.1" y="250" class="st" text-anchor="middle" textLength="24.2" lengthAdjust="spacingAndGlyphs">POTOSÍ</text>
<text x="558.7" y="275.1" class="st" text-anchor="start" textLength="44" lengthAdjust="spacingAndGlyphs">GUANAJUATO</text>
<text x="682.2" y="259.8" class="st" text-anchor="start" textLength="33" lengthAdjust="spacingAndGlyphs">VERACRUZ</text>
<text x="636" y="312.5" class="st" text-anchor="start" textLength="29" lengthAdjust="spacingAndGlyphs">HIDALGO</text>
<text x="595" y="361" class="st" text-anchor="start" textLength="25" lengthAdjust="spacingAndGlyphs">MÉXICO</text>
<text x="631" y="415.9" class="st" text-anchor="start" textLength="31" lengthAdjust="spacingAndGlyphs">MORELOS</text>
<text x="681" y="426.7" class="st" text-anchor="start" textLength="24" lengthAdjust="spacingAndGlyphs">PUEBLA</text>
<text x="573.4" y="464" class="st" text-anchor="start" textLength="34.7" lengthAdjust="spacingAndGlyphs">GUERRERO</text>
<text x="764.6" y="473" class="st" text-anchor="start" textLength="26.3" lengthAdjust="spacingAndGlyphs">OAXACA</text>
<text x="922" y="453.7" class="st" text-anchor="start" textLength="29.7" lengthAdjust="spacingAndGlyphs">TABASCO</text>
<text x="1019.9" y="441.8" class="st" text-anchor="start" textLength="34.5" lengthAdjust="spacingAndGlyphs">CAMPECHE</text>
<text x="1007.4" y="486.5" class="st" text-anchor="start" textLength="26.9" lengthAdjust="spacingAndGlyphs">CHIAPAS</text>
<text x="543.6" y="315.9" class="ct" text-anchor="start" textLength="31.4" lengthAdjust="spacingAndGlyphs">Querétaro</text>
<text x="664.9" y="332" class="ct" text-anchor="start" textLength="23.3" lengthAdjust="spacingAndGlyphs">Pachuca</text>
<text x="594.2" y="378" class="ct" text-anchor="start" textLength="18.4" lengthAdjust="spacingAndGlyphs">Toluca</text>
<text x="692" y="378.5" class="ct" text-anchor="start" textLength="23.3" lengthAdjust="spacingAndGlyphs">Tlaxcala</text>
<text x="761.8" y="367.1" class="ct" text-anchor="start" textLength="20" lengthAdjust="spacingAndGlyphs">Xalapa</text>
<text x="601.8" y="404.2" class="ct" text-anchor="start" textLength="34.2" lengthAdjust="spacingAndGlyphs">Cuernavaca</text>
<text x="692.7" y="402" class="ct" text-anchor="start" textLength="19.7" lengthAdjust="spacingAndGlyphs">Puebla</text>
<text x="623.5" y="473.5" class="ct" text-anchor="start" textLength="38.1" lengthAdjust="spacingAndGlyphs">Chilpancingo</text>
<text x="775.1" y="498.2" class="ct" text-anchor="start" textLength="21.9" lengthAdjust="spacingAndGlyphs">Oaxaca</text>
<text x="977.6" y="458.1" class="ct" text-anchor="start" textLength="38.4" lengthAdjust="spacingAndGlyphs">Villahermosa</text>
<text x="715.4" y="218.4" class="pt" text-anchor="start" textLength="21.7" lengthAdjust="spacingAndGlyphs">Tampico</text>
<text x="741.4" y="289.3" class="pt" text-anchor="start" textLength="18.6" lengthAdjust="spacingAndGlyphs">Tuxpan</text>
<text x="806.9" y="381.5" class="pt" text-anchor="start" textLength="23.5" lengthAdjust="spacingAndGlyphs">Veracruz</text>
<text x="970" y="416.5" class="pt" text-anchor="start" textLength="22.4" lengthAdjust="spacingAndGlyphs">Frontera</text>
<text x="851" y="440.9" class="pt" text-anchor="start" textLength="39.7" lengthAdjust="spacingAndGlyphs">Coatzacoalcos</text>
<text x="893.2" y="455.3" class="pt" text-anchor="start" textLength="23" lengthAdjust="spacingAndGlyphs">Pajaritos</text>
<text x="885.5" y="463.5" class="pt" text-anchor="start" textLength="26.9" lengthAdjust="spacingAndGlyphs">Minatitlan</text>
<text x="694.7" y="226.7" class="ap" text-anchor="start" textLength="12" lengthAdjust="spacingAndGlyphs">TAM</text>
<text x="588" y="306.2" class="ap" text-anchor="start" textLength="13.8" lengthAdjust="spacingAndGlyphs">QRO</text>
<text x="621" y="376" class="ap" text-anchor="start" textLength="10" lengthAdjust="spacingAndGlyphs">TLC</text>
<text x="646.8" y="371" class="ap" text-anchor="start" textLength="12.6" lengthAdjust="spacingAndGlyphs">MEX</text>
<text x="677.7" y="398.4" class="ap" text-anchor="start" textLength="10.5" lengthAdjust="spacingAndGlyphs">PBC</text>
<text x="787.3" y="388.5" class="ap" text-anchor="start" textLength="9.5" lengthAdjust="spacingAndGlyphs">VER</text>
<text x="983.4" y="447.6" class="ap" text-anchor="start" textLength="11.6" lengthAdjust="spacingAndGlyphs">VSA</text>
<rect x="574.4" y="308.59999999999997" width="1.200" height="1.200" fill="#222"/>
<rect x="662.9" y="333.4" width="1.200" height="1.200" fill="#222"/>
<rect x="612.9" y="378.9" width="1.200" height="1.200" fill="#222"/>
<rect x="690.1999999999999" y="379.9" width="1.200" height="1.200" fill="#222"/>
<rect x="760.4" y="368.2" width="1.200" height="1.200" fill="#222"/>
<rect x="636.4" y="400.9" width="1.200" height="1.200" fill="#222"/>
<rect x="691.4" y="394.09999999999997" width="1.200" height="1.200" fill="#222"/>
<rect x="622.0" y="474.4" width="1.200" height="1.200" fill="#222"/>
<rect x="773.4" y="499.4" width="1.200" height="1.200" fill="#222"/>
<rect x="975.9" y="450.4" width="1.200" height="1.200" fill="#222"/>
<path d="M711.2 216.9L711.9000000000001 218.0V222.5L711.2 223.9L710.5 222.5V218.0ZM707.5 221.4L711.2 219.2L714.9000000000001 221.4V222.1L711.2 220.8L707.5 222.1ZM709.5 223.8L711.2 222.6L712.9000000000001 223.8V224.4H709.5Z" fill="#cf6f22"/>
<path d="M585.6 306.4L586.3000000000001 307.5V312L585.6 313.4L584.9 312V307.5ZM581.9 310.9L585.6 308.7L589.3000000000001 310.9V311.6L585.6 310.3L581.9 311.6ZM583.9 313.3L585.6 312.1L587.3000000000001 313.3V313.9H583.9Z" fill="#cf6f22"/>
<path d="M618.5 376.59999999999997L619.2 377.7V382.2L618.5 383.59999999999997L617.8 382.2V377.7ZM614.8 381.09999999999997L618.5 378.9L622.2 381.09999999999997V381.8L618.5 380.5L614.8 381.8ZM616.8 383.5L618.5 382.3L620.2 383.5V384.09999999999997H616.8Z" fill="#cf6f22"/>
<path d="M644.8 371.2L645.5 372.3V376.8L644.8 378.2L644.0999999999999 376.8V372.3ZM641.0999999999999 375.7L644.8 373.5L648.5 375.7V376.40000000000003L644.8 375.1L641.0999999999999 376.40000000000003ZM643.0999999999999 378.1L644.8 376.90000000000003L646.5 378.1V378.7H643.0999999999999Z" fill="#cf6f22"/>
<path d="M682.4 385.59999999999997L683.1 386.7V391.2L682.4 392.59999999999997L681.6999999999999 391.2V386.7ZM678.6999999999999 390.09999999999997L682.4 387.9L686.1 390.09999999999997V390.8L682.4 389.5L678.6999999999999 390.8ZM680.6999999999999 392.5L682.4 391.3L684.1 392.5V393.09999999999997H680.6999999999999Z" fill="#cf6f22"/>
<path d="M797.5 386.4L798.2 387.5V392L797.5 393.4L796.8 392V387.5ZM793.8 390.9L797.5 388.7L801.2 390.9V391.6L797.5 390.3L793.8 391.6ZM795.8 393.3L797.5 392.1L799.2 393.3V393.9H795.8Z" fill="#cf6f22"/>
<path d="M980.5 447.79999999999995L981.2 448.9V453.4L980.5 454.79999999999995L979.8 453.4V448.9ZM976.8 452.29999999999995L980.5 450.09999999999997L984.2 452.29999999999995V453.0L980.5 451.7L976.8 453.0ZM978.8 454.7L980.5 453.5L982.2 454.7V455.29999999999995H978.8Z" fill="#cf6f22"/>
<path d="M711.7 218.70000000000002L716.3000000000001 223.3L711.7 227.9L707.1 223.3Z" fill="#416fae"/>
<path d="M736.7 287.7L741.3000000000001 292.3L736.7 296.90000000000003L732.1 292.3Z" fill="#416fae"/>
<path d="M803.5 381.4L808.1 386L803.5 390.6L798.9 386Z" fill="#416fae"/>
<path d="M989.5 418.0L994.1 422.6L989.5 427.20000000000005L984.9 422.6Z" fill="#416fae"/>
<path d="M895.5 439.5L900.1 444.1L895.5 448.70000000000005L890.9 444.1Z" fill="#416fae"/>
<path d="M888.4 447.79999999999995L893.0 452.4L888.4 457.0L883.8 452.4Z" fill="#416fae"/>
</g>
<rect x="549.5" y="206.5" width="10" height="10" fill="#fff" stroke="#2f82c4" stroke-width="1"/>
<rect x="799.0" y="206.5" width="10" height="10" fill="#fff" stroke="#2f82c4" stroke-width="1"/>
<rect x="1048.5" y="206.5" width="10" height="10" fill="#fff" stroke="#2f82c4" stroke-width="1"/>
<rect x="549.5" y="349.0" width="10" height="10" fill="#fff" stroke="#2f82c4" stroke-width="1"/>
<rect x="1048.5" y="349.0" width="10" height="10" fill="#fff" stroke="#2f82c4" stroke-width="1"/>
<rect x="549.5" y="491.5" width="10" height="10" fill="#fff" stroke="#2f82c4" stroke-width="1"/>
<rect x="799.0" y="491.5" width="10" height="10" fill="#fff" stroke="#2f82c4" stroke-width="1"/>
<rect x="1048.5" y="491.5" width="10" height="10" fill="#fff" stroke="#2f82c4" stroke-width="1"/>
<rect x="549.5" y="206.5" width="509.0" height="295.0" fill="none" stroke="#35a0e4" stroke-width="1"/>
<rect x="549.5" y="206.5" width="509.0" height="295.0" fill="none" stroke="#6a0c36" stroke-width="1" stroke-dasharray="4 2"/>
</svg>
</body></html>
